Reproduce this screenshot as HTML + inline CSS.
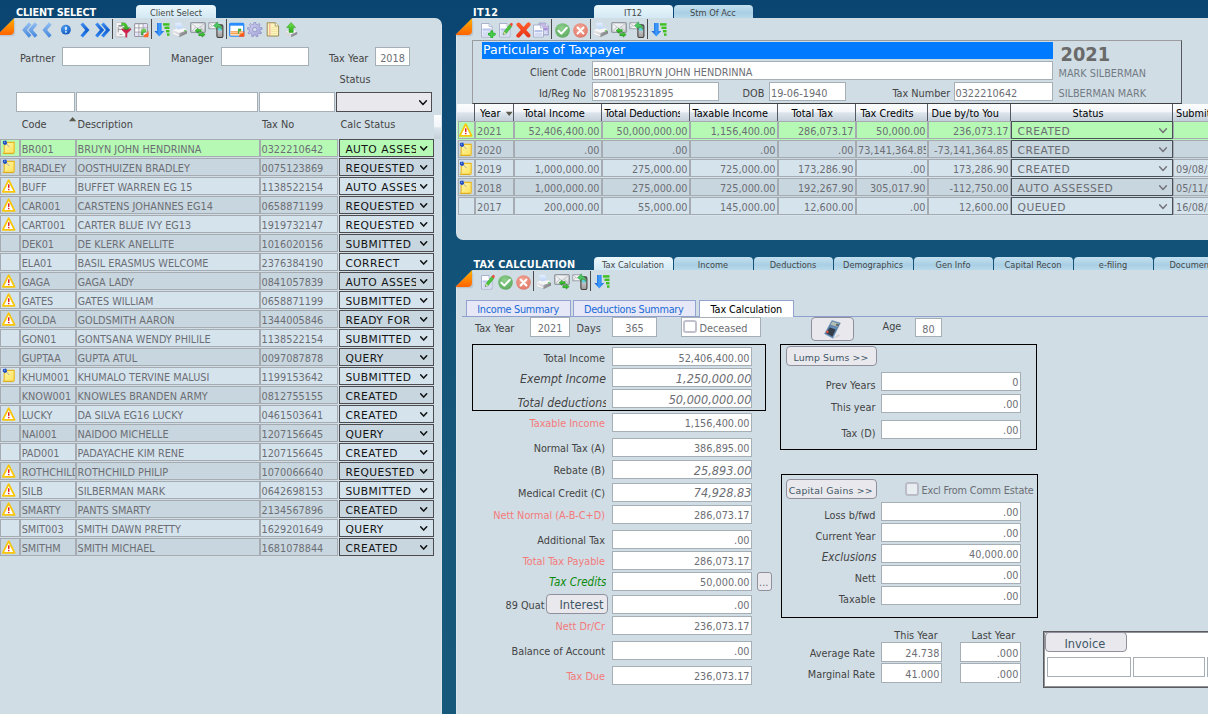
<!DOCTYPE html><html><head><meta charset="utf-8"><title>Client Select</title><style>
*{box-sizing:content-box;margin:0;padding:0}
html,body{width:1208px;height:714px;overflow:hidden}
body{position:relative;background:linear-gradient(180deg,#0a4571 0px,#0b4772 40px,#125279 250px,#16577a 500px,#17597b 714px);font-family:"DejaVu Sans Condensed","Liberation Sans",sans-serif}
div,span,svg{position:absolute}
.x{white-space:nowrap;line-height:14px;height:14px;color:#444;overflow:visible}
.t{font:10.8px "DejaVu Sans Condensed","Liberation Sans",sans-serif;line-height:14px}
.tb{font:bold 10.8px "DejaVu Sans Condensed","Liberation Sans",sans-serif;line-height:14px;color:#fdfdfd}
.tab{font:9.2px "DejaVu Sans Condensed","Liberation Sans",sans-serif;line-height:14px;color:#464646}
.it{font:italic 12.2px "DejaVu Sans Condensed","Liberation Sans",sans-serif;line-height:14px}
.sel{font:10.7px "DejaVu Sans","Liberation Sans",sans-serif;line-height:14px;color:#141414;letter-spacing:.42px;word-spacing:.4px}
.btn{font:11.4px "DejaVu Sans","Liberation Sans",sans-serif;line-height:14px;color:#3d5566}
.sbtn{font:9.35px "DejaVu Sans","Liberation Sans",sans-serif;line-height:14px;color:#3d5566;letter-spacing:.12px}
.big{font:bold 19.8px "DejaVu Sans Condensed","Liberation Sans",sans-serif;line-height:14px;color:#6a6a6a}
.ttl{font:12.5px "DejaVu Sans","Liberation Sans",sans-serif;line-height:14px;color:#fff}
.g{color:#6c6e74}
.g2{color:#737b84}
.k{color:#000}
.d{color:#444}
.r{color:#f47a7a}
.gr{color:#0a8a0a}
.bl{color:#1a6ad6}
.panel{background:#d0dde5}
.in{background:#fff;border:1px solid #a7afb6}
.c{border:1px solid #a6abb2}
.bt{background:#e9e9ed;border:1px solid #8f8f9d;border-radius:4px}
.sl{border:1px solid #4c4c50}
.sep{width:1px;background:#4a4a4a}
.bb{border:1px solid #000}
</style></head><body>
<div class="panel" style="left:0px;top:18px;width:442px;height:696px;border-top-right-radius:7px"></div>
<div class="" style="left:441px;top:25px;width:1px;height:689px;background:#dce6ed"></div>
<span class="x tb" style="left:16px;top:6px;letter-spacing:-.15px">CLIENT SELECT</span>
<div class="" style="left:136px;top:5px;width:80px;height:13px;background:linear-gradient(180deg,#eaf7fc 0%,#d3e9f4 100%);border-radius:4px 4px 0 0"></div>
<span class="x tab" style="left:26.0px;width:300px;text-align:center;top:6px;">Client Select</span>
<svg style="left:-3px;top:18px" width="20" height="20" viewBox="0 0 20 20"><defs><linearGradient id="g1" x1="0" y1="0" x2="0" y2="1"><stop offset="0" stop-color="#ffb000"/><stop offset="1" stop-color="#ff6400"/></linearGradient></defs><path d="M-1 -1 L17.6 -1 L17.6 0 L0 17.6 L-1 17.6 Z" fill="#0b4672"/><path d="M1.2 18.2 L15 18.2 Q18.2 18.2 18.2 15 L18.2 2 Z" fill="#7d8a94" opacity=".25"/><path d="M17 .3 L17 12.5 Q17 17 12.5 17 L.3 17 Z" fill="url(#g1)"/></svg>
<svg style="left:0px;top:18px" width="116" height="24" viewBox="0 0 116 24"><defs><linearGradient id="g2" x1="0" y1="0" x2="0" y2="1"><stop offset="0" stop-color="#8fbcf0"/><stop offset="1" stop-color="#4a8ade"/></linearGradient><linearGradient id="g3" x1="0" y1="0" x2="0" y2="1"><stop offset="0" stop-color="#3f8df0"/><stop offset=".5" stop-color="#0f5fd0"/><stop offset="1" stop-color="#2f86f0"/></linearGradient><radialGradient id="g4" cx=".4" cy=".3" r=".8"><stop offset="0" stop-color="#4fa0f5"/><stop offset="1" stop-color="#0a50b8"/></radialGradient></defs><path d="M30.1 5.5 L24.5 12 L30.1 18.5" fill="none" stroke="url(#g2)" stroke-width="3.5" stroke-linejoin="miter" stroke-linecap="butt"/><path d="M36.1 5.5 L30.5 12 L36.1 18.5" fill="none" stroke="url(#g2)" stroke-width="3.5" stroke-linejoin="miter" stroke-linecap="butt"/><path d="M50.3 5.5 L44.7 12 L50.3 18.5" fill="none" stroke="url(#g2)" stroke-width="3.5" stroke-linejoin="miter" stroke-linecap="butt"/><circle cx="65.9" cy="11.7" r="4.9" fill="url(#g4)"/><rect x="65.1" y="8.8" width="1.7" height="3.4" rx=".6" fill="#eaf3ff"/><rect x="65.1" y="13" width="1.7" height="1.7" rx=".6" fill="#eaf3ff"/><path d="M81.7 5.5 L87.3 12 L81.7 18.5" fill="none" stroke="url(#g3)" stroke-width="3.3" stroke-linejoin="miter" stroke-linecap="butt"/><path d="M96.4 5.5 L102.0 12 L96.4 18.5" fill="none" stroke="url(#g3)" stroke-width="3.3" stroke-linejoin="miter" stroke-linecap="butt"/><path d="M102.4 5.5 L108.0 12 L102.4 18.5" fill="none" stroke="url(#g3)" stroke-width="3.3" stroke-linejoin="miter" stroke-linecap="butt"/><rect x="112" y="1" width="1" height="20" fill="#4a4a4a"/></svg>
<svg style="left:115px;top:22px" width="17" height="16" viewBox="0 0 17 16"><defs><linearGradient id="g5" x1="0" y1="0" x2="0" y2="1"><stop offset="0" stop-color="#5ad03a"/><stop offset="1" stop-color="#1f9a1a"/></linearGradient><linearGradient id="g6" x1="0" y1="0" x2="0" y2="1"><stop offset="0" stop-color="#c4103c"/><stop offset="1" stop-color="#f0406a"/></linearGradient></defs><rect x="1" y=".6" width="9.4" height="14.2" fill="#f4f4f5" stroke="#c9c9cd" stroke-width=".8"/><rect x="1.4" y="14.6" width="9" height=".9" fill="#b9b9bd" opacity=".7"/><rect x="3.4" y="3.2" width="4" height="1.4" fill="#7d7d82"/><path d="M3.2 5.2 V10.4 M3.2 7.4 H6.4" stroke="#8d8d92" stroke-width=".9" fill="none"/><rect x="4.6" y="12.2" width="2.6" height=".8" fill="#9a9a9e"/><path d="M6.6 .8 Q12 .2 12.6 5.6 L14.9 5.6 L11.3 9.4 L7.7 5.6 L9.9 5.6 Q9.6 3 6.6 3.2 Z" fill="url(#g5)" stroke="#1f8a14" stroke-width=".4"/><path d="M6.8 6.6 Q11.3 9.2 15.8 6.6 L15.8 7.8 L12 11.4 L12 15.2 L10.7 15.2 L10.7 11.4 L6.8 7.8 Z" fill="url(#g6)" stroke="#b00c38" stroke-width=".4"/></svg>
<svg style="left:134px;top:23px" width="16" height="15" viewBox="0 0 16 15"><defs><linearGradient id="g7" x1="0" y1="0" x2="0" y2="1"><stop offset="0" stop-color="#7fe05a"/><stop offset="1" stop-color="#2a9a2a"/></linearGradient></defs><rect x=".6" y=".6" width="12.8" height="12.8" rx="1" fill="#fdfdff" stroke="#98989f" stroke-width="1.1"/><rect x="9.6" y="1.2" width="3.2" height="3.4" fill="#e6e0ff"/><rect x="1.2" y="9.6" width="3.4" height="3.2" fill="#e6e0ff"/><rect x="5.4" y="9.6" width="3.4" height="3.2" fill="#efeaff"/><path d="M4.9 .6 V13.4 M9.1 .6 V13.4 M.6 4.9 H13.4 M.6 9.1 H13.4" stroke="#a3a3ad" stroke-width="1" fill="none"/><path d="M7 12 L7.4 6.4 L10.8 6 Q12.4 6.2 12.2 7.8 Q12 9.4 10.4 9.4 L9 9.4 L8.8 12 Z" fill="url(#g7)" stroke="#2a8a2a" stroke-width=".3"/><path d="M14.4 7.6 Q15 11 14.2 14.2 L9.6 14.2 Q9.4 12 11 11.2 Q13.6 10.6 14.4 7.6 Z" fill="#ff6a2a"/></svg>
<div class="sep" style="left:151px;top:19px;width:1px;height:20px;"></div>
<svg style="left:154px;top:22px" width="16" height="16" viewBox="0 0 16 16"><defs><linearGradient id="g8" x1="0" y1="0" x2="1" y2="0"><stop offset="0" stop-color="#0a55c8"/><stop offset=".5" stop-color="#3f9bff"/><stop offset="1" stop-color="#1a6fe0"/></linearGradient></defs><path d="M3 1 L7.6 1 L7.6 9 L10.2 9 L5.3 14.6 L.4 9 L3 9 Z" fill="url(#g8)"/><rect x="9" y="1.2" width="6.5" height="2.4" fill="#3fc01f"/><rect x="10.5" y="4.6" width="5" height="2.4" fill="#3fc01f"/><rect x="12" y="8" width="3.5" height="2.4" fill="#3fc01f"/><rect x="13" y="11.4" width="2.5" height="2.4" fill="#3fc01f"/></svg>
<svg style="left:172px;top:22px" width="16" height="16" viewBox="0 0 16 16"><defs><linearGradient id="g9" x1="0" y1="0" x2="0" y2="1"><stop offset="0" stop-color="#ececee"/><stop offset="1" stop-color="#c2c2c5"/></linearGradient><linearGradient id="g11" x1="0" y1="0" x2="1" y2="1"><stop offset="0" stop-color="#b4b4b7"/><stop offset="1" stop-color="#6c6c6f"/></linearGradient><linearGradient id="g10" x1="0" y1="0" x2="0" y2="1"><stop offset="0" stop-color="#eaf2ff"/><stop offset="1" stop-color="#b9d3f7"/></linearGradient></defs><path d="M2.6 1 L8.8 .5 L11.3 6.2 L5 7.2 Z" fill="url(#g10)" stroke="#cfdff2" stroke-width=".5"/><path d="M.6 8.2 L4.6 6.6 L6 7.4 L11 6.4 L12.4 6.2 L15 8.4 L7.6 11 Z" fill="#f6f6f7"/><path d="M.6 8.2 L7.6 11 L7.4 15.2 L.6 12.2 Z" fill="url(#g9)"/><path d="M7.6 11 L15 8.4 L15 11.6 L7.4 15.2 Z" fill="url(#g11)"/><path d="M1.2 10.6 L6.8 13 L6.8 14.3 L1.2 11.9 Z" fill="#fdfdfd"/><ellipse cx="13" cy="8.7" rx="1" ry=".6" fill="#3ec62a"/></svg>
<svg style="left:190px;top:21px" width="17" height="17" viewBox="0 0 17 17"><defs><linearGradient id="g12" x1="0" y1="0" x2="1" y2="1"><stop offset="0" stop-color="#fdfdfd"/><stop offset="1" stop-color="#d5d7da"/></linearGradient><linearGradient id="g13" x1="0" y1="0" x2="0" y2="1"><stop offset="0" stop-color="#58e048"/><stop offset="1" stop-color="#14a010"/></linearGradient></defs><rect x=".8" y="1.7" width="14.4" height="9.6" rx=".8" fill="url(#g12)" stroke="#7d838b" stroke-width="1.1"/><path d="M1.2 2.2 L8 7.6 L14.8 2.2 M1.2 11 L5.8 6 M14.8 11 L10.2 6" fill="none" stroke="#b9bcc2" stroke-width=".8"/><path d="M5 9.7 L8 7.2 L8 8.6 L11.2 8.6 L11.2 10.8 L8 10.8 L8 12.2 Z" fill="url(#g13)" stroke="#1a7a14" stroke-width=".45"/><path d="M15.2 13.6 L12.2 11.1 L12.2 12.5 L8.8 12.5 L8.8 14.7 L12.2 14.7 L12.2 16.1 Z" fill="url(#g13)" stroke="#1a7a14" stroke-width=".45"/></svg>
<svg style="left:207.5px;top:21px" width="16" height="17" viewBox="0 0 16 17"><defs><linearGradient id="g14" x1="0" y1="0" x2="0" y2="1"><stop offset="0" stop-color="#7a7a7c"/><stop offset=".45" stop-color="#c6c6c8"/><stop offset="1" stop-color="#9a9a9c"/></linearGradient></defs><rect x=".8" y="1.8" width="8" height="6" fill="#f6f6f7" stroke="#8c9098" stroke-width=".8"/><path d="M1 2 L4.8 5.2 L8.6 2 M1 7.6 L3.6 4.4" fill="none" stroke="#a9adb3" stroke-width=".7"/><rect x="8.9" y="3.9" width="6" height="12.6" rx="1.4" fill="url(#g14)" stroke="#463f3a" stroke-width="1.1"/><rect x="10" y="7" width="3.8" height="2.6" fill="#5fd0e0"/><path d="M5.6 4.8 L9.6 .8 L9.6 2.9 Q13.8 3.2 13.6 8.4 Q12.4 5.6 9.6 5.9 L9.6 8 Z" fill="#4cc860" stroke="#23903a" stroke-width=".45"/></svg>
<div class="sep" style="left:226px;top:19px;width:1px;height:20px;"></div>
<svg style="left:229px;top:22px" width="16" height="15" viewBox="0 0 16 15"><rect x=".7" y="1.3" width="14" height="12.8" rx="1" fill="#fff" stroke="#2a8cff" stroke-width="1.3"/><rect x=".7" y="1.3" width="14" height="2.4" fill="#2a8cff"/><rect x="1.5" y="9.3" width="12.4" height="1.2" fill="#ff8c2a"/><rect x="1.5" y="11" width="12.4" height="1.2" fill="#ffa04a"/><rect x="1.5" y="12.6" width="12.4" height=".9" fill="#ffbe80"/><path d="M8.8 11.8 L9 6.8 L11.4 6.6 Q12.6 6.8 12.4 8 Q12.2 9.2 11 9.2 L10.2 9.2 L10.1 11.8 Z" fill="#44b044"/><path d="M15.4 8.2 L15.4 14.8 L9.8 14.8 Q10 12.6 11.8 12 Q14.6 11.4 15.4 8.2 Z" fill="#ff5a1a"/></svg>
<svg style="left:247px;top:22px" width="16" height="16" viewBox="0 0 16 16"><defs><linearGradient id="g15" x1="0" y1="0" x2="1" y2="1"><stop offset="0" stop-color="#cfcff0"/><stop offset="1" stop-color="#a3a3d8"/></linearGradient></defs><path d="M6.78 2.30 L6.91 0.25 L8.69 0.25 L8.82 2.30 L10.43 2.88 L11.84 1.40 L13.20 2.54 L11.99 4.19 L12.85 5.67 L14.88 5.45 L15.19 7.20 L13.20 7.68 L12.90 9.37 L14.61 10.51 L13.72 12.04 L11.88 11.13 L10.57 12.23 L11.15 14.20 L9.48 14.81 L8.66 12.93 L6.94 12.93 L6.12 14.81 L4.45 14.20 L5.03 12.23 L3.72 11.13 L1.88 12.04 L0.99 10.51 L2.70 9.37 L2.40 7.68 L0.41 7.20 L0.72 5.45 L2.75 5.67 L3.61 4.19 L2.40 2.54 L3.76 1.40 L5.17 2.88 Z" fill="url(#g15)" stroke="#8a8ac4" stroke-width=".7" stroke-linejoin="round"/><circle cx="7.8" cy="7.6" r="2.2" fill="#d3dfe8" stroke="#8585c0" stroke-width=".7"/></svg>
<svg style="left:266px;top:22px" width="14" height="15" viewBox="0 0 14 15"><path d="M1.2 .8 L9.2 .8 L12.6 4 L12.6 14 L1.2 14 Z" fill="#fdf5c0" stroke="#8f7f45" stroke-width=".9"/><path d="M9.2 .8 L9.2 4 L12.6 4" fill="#fffbe4" stroke="#8f7f45" stroke-width=".7"/><rect x="3.4" y="1.3" width=".9" height="12.3" fill="#f29484"/><path d="M5 5.5 H11.4 M5 7.5 H11.4 M5 9.5 H11.4 M5 11.5 H11.4" stroke="#ecdc96" stroke-width=".7"/></svg>
<svg style="left:284px;top:22px" width="15" height="16" viewBox="0 0 15 16"><defs><linearGradient id="g16" x1="0" y1="0" x2="0" y2="1"><stop offset="0" stop-color="#6ee04a"/><stop offset="1" stop-color="#2fae1c"/></linearGradient></defs><path d="M1 9.8 L4.4 8 L10.6 8 L13.2 9.8 L7.2 12.6 Z" fill="#f4f4f5" stroke="#c2c2c6" stroke-width=".4"/><path d="M1 9.8 L7.2 12.6 L7.2 15.2 L1 12.2 Z" fill="#d8d8da"/><path d="M13.2 9.8 L7.2 12.6 L7.2 15.2 L13.2 12.2 Z" fill="#8e8e92"/><path d="M7.1 .5 L11.6 5.6 L9.2 5.6 L9.2 10.4 L5 10.4 L5 5.6 L2.6 5.6 Z" fill="url(#g16)" stroke="#2a9a18" stroke-width=".5"/></svg>
<span class="x t" style="left:20px;top:52px;">Partner</span>
<div class="in" style="left:62px;top:47px;width:86px;height:17px;"></div>
<span class="x t" style="left:171px;top:52px;">Manager</span>
<div class="in" style="left:221px;top:47px;width:86px;height:17px;"></div>
<span class="x t" style="left:329px;top:52px;">Tax Year</span>
<div class="in" style="left:375px;top:47px;width:33px;height:17px;"></div>
<span class="x t g" style="left:242.5px;width:300px;text-align:center;top:52px;">2018</span>
<span class="x t" style="left:339.5px;top:73px;">Status</span>
<div class="in" style="left:16px;top:92px;width:56.5px;height:18px;"></div>
<div class="in" style="left:76px;top:92px;width:179.5px;height:18px;"></div>
<div class="in" style="left:259px;top:92px;width:73.5px;height:18px;"></div>
<div class="sl" style="left:336px;top:92px;width:94px;height:18px;background:#e9e9ed"></div>
<svg style="left:418.5px;top:99.6px" width="9" height="6.48" viewBox="0 0 9 6.48"><path d="M0.6 0.8 L4.0 4.48 L7.4 0.8" fill="none" stroke="#111" stroke-width="1.5" stroke-linecap="round" stroke-linejoin="round"/></svg>
<span class="x t" style="left:21.7px;top:118px;">Code</span>
<span class="x t" style="left:77.5px;top:118px;">Description</span>
<span class="x t" style="left:262px;top:118px;">Tax No</span>
<span class="x t" style="left:340.5px;top:118px;">Calc Status</span>
<svg style="left:68px;top:116px" width="10" height="6" viewBox="0 0 10 6"><path d="M1 5.2 L4.6 1 L8.2 5.2 Z" fill="#5a5a4c"/></svg>
<div class="" style="left:434px;top:115px;width:7px;height:23.5px;background:linear-gradient(180deg,#fbfcfd 0%,#f2f6f9 48%,#dbe4eb 54%,#c4d0da 100%)"></div>
<div class="c" style="left:0px;top:139px;width:18px;height:16px;background:#b5f9b4"></div>
<div class="c" style="left:20px;top:139px;width:54px;height:16px;background:#b5f9b4"></div>
<div class="c" style="left:76px;top:139px;width:182px;height:16px;background:#b5f9b4"></div>
<div class="c" style="left:260px;top:139px;width:76px;height:16px;background:#b5f9b4"></div>
<svg style="left:2px;top:140px" width="15" height="16" viewBox="0 0 15 16"><defs><linearGradient id="g17" x1="0" y1="0" x2="1" y2="1"><stop offset="0" stop-color="#fff8a8"/><stop offset="1" stop-color="#fbe05c"/></linearGradient></defs><path d="M2.2 2.4 L12.2 2.4 L12.2 12 Q12.2 13.3 11 13.3 L1.4 13.3 Q2.2 12.5 2.2 11.2 Z" fill="url(#g17)" stroke="#e9b822" stroke-width="1.1"/><path d="M1.6 13.6 L11.4 13.6" stroke="#d9a514" stroke-width=".8"/><path d="M3.4 2.8 L7.4 7" stroke="#a2a2ac" stroke-width=".9"/><path d="M1 1 L4.2 .6 L5.2 3.4 L3 5.2 L.8 3.6 Z" fill="#1d4ec4"/><circle cx="2.6" cy="2.2" r=".8" fill="#6a96f4"/></svg>
<div style="left:21px;top:140px;width:54px;height:16px;overflow:hidden"><span class="x t g" style="left:.7px;top:3px">BR001</span></div>
<span class="x t g" style="left:77.5px;top:143px;">BRUYN JOHN HENDRINNA</span>
<span class="x t g" style="left:261.5px;top:143px;">0322210642</span>
<div class="sl" style="left:339px;top:139px;width:92.5px;height:16px;background:#b5f9b4"></div>
<div style="left:345px;top:140px;width:70.5px;height:16px;overflow:hidden"><span class="x sel" style="left:.4px;top:2.8000000000000007px">AUTO ASSESSED</span></div>
<svg style="left:420.3px;top:145.8px" width="8.3" height="6.088" viewBox="0 0 8.3 6.088"><path d="M0.6 0.8 L3.65 4.088 L6.7 0.8" fill="none" stroke="#111" stroke-width="1.5" stroke-linecap="round" stroke-linejoin="round"/></svg>
<div class="c" style="left:0px;top:158px;width:18px;height:16px;background:#c8d6df"></div>
<div class="c" style="left:20px;top:158px;width:54px;height:16px;background:#c8d6df"></div>
<div class="c" style="left:76px;top:158px;width:182px;height:16px;background:#c8d6df"></div>
<div class="c" style="left:260px;top:158px;width:76px;height:16px;background:#c8d6df"></div>
<svg style="left:2px;top:159px" width="15" height="16" viewBox="0 0 15 16"><defs><linearGradient id="g18" x1="0" y1="0" x2="1" y2="1"><stop offset="0" stop-color="#fff8a8"/><stop offset="1" stop-color="#fbe05c"/></linearGradient></defs><path d="M2.2 2.4 L12.2 2.4 L12.2 12 Q12.2 13.3 11 13.3 L1.4 13.3 Q2.2 12.5 2.2 11.2 Z" fill="url(#g18)" stroke="#e9b822" stroke-width="1.1"/><path d="M1.6 13.6 L11.4 13.6" stroke="#d9a514" stroke-width=".8"/><path d="M3.4 2.8 L7.4 7" stroke="#a2a2ac" stroke-width=".9"/><path d="M1 1 L4.2 .6 L5.2 3.4 L3 5.2 L.8 3.6 Z" fill="#1d4ec4"/><circle cx="2.6" cy="2.2" r=".8" fill="#6a96f4"/></svg>
<div style="left:21px;top:159px;width:54px;height:16px;overflow:hidden"><span class="x t g" style="left:.7px;top:3px">BRADLEY</span></div>
<span class="x t g" style="left:77.5px;top:162px;">OOSTHUIZEN BRADLEY</span>
<span class="x t g" style="left:261.5px;top:162px;">0075123869</span>
<div class="sl" style="left:339px;top:158px;width:92.5px;height:16px;background:#c8d6df"></div>
<div style="left:345px;top:159px;width:70.5px;height:16px;overflow:hidden"><span class="x sel" style="left:.4px;top:2.8000000000000007px">REQUESTED</span></div>
<svg style="left:420.3px;top:164.8px" width="8.3" height="6.088" viewBox="0 0 8.3 6.088"><path d="M0.6 0.8 L3.65 4.088 L6.7 0.8" fill="none" stroke="#111" stroke-width="1.5" stroke-linecap="round" stroke-linejoin="round"/></svg>
<div class="c" style="left:0px;top:177px;width:18px;height:16px;background:#d5e3ed"></div>
<div class="c" style="left:20px;top:177px;width:54px;height:16px;background:#d5e3ed"></div>
<div class="c" style="left:76px;top:177px;width:182px;height:16px;background:#d5e3ed"></div>
<div class="c" style="left:260px;top:177px;width:76px;height:16px;background:#d5e3ed"></div>
<svg style="left:2px;top:179px" width="14" height="15" viewBox="0 0 14 15"><path d="M6.7 1.2 L12.6 12.8 L.8 12.8 Z" fill="#fff" stroke="#f8c60a" stroke-width="1.8" stroke-linejoin="round"/><rect x="6" y="5.2" width="1.5" height="3.8" rx=".4" fill="#e32222"/><rect x="6" y="9.8" width="1.5" height="1.5" rx=".4" fill="#e32222"/></svg>
<div style="left:21px;top:178px;width:54px;height:16px;overflow:hidden"><span class="x t g" style="left:.7px;top:3px">BUFF</span></div>
<span class="x t g" style="left:77.5px;top:181px;">BUFFET WARREN EG 15</span>
<span class="x t g" style="left:261.5px;top:181px;">1138522154</span>
<div class="sl" style="left:339px;top:177px;width:92.5px;height:16px;background:#d5e3ed"></div>
<div style="left:345px;top:178px;width:70.5px;height:16px;overflow:hidden"><span class="x sel" style="left:.4px;top:2.8000000000000007px">AUTO ASSESSED</span></div>
<svg style="left:420.3px;top:183.8px" width="8.3" height="6.088" viewBox="0 0 8.3 6.088"><path d="M0.6 0.8 L3.65 4.088 L6.7 0.8" fill="none" stroke="#111" stroke-width="1.5" stroke-linecap="round" stroke-linejoin="round"/></svg>
<div class="c" style="left:0px;top:196px;width:18px;height:16px;background:#c8d6df"></div>
<div class="c" style="left:20px;top:196px;width:54px;height:16px;background:#c8d6df"></div>
<div class="c" style="left:76px;top:196px;width:182px;height:16px;background:#c8d6df"></div>
<div class="c" style="left:260px;top:196px;width:76px;height:16px;background:#c8d6df"></div>
<svg style="left:2px;top:198px" width="14" height="15" viewBox="0 0 14 15"><path d="M6.7 1.2 L12.6 12.8 L.8 12.8 Z" fill="#fff" stroke="#f8c60a" stroke-width="1.8" stroke-linejoin="round"/><rect x="6" y="5.2" width="1.5" height="3.8" rx=".4" fill="#e32222"/><rect x="6" y="9.8" width="1.5" height="1.5" rx=".4" fill="#e32222"/></svg>
<div style="left:21px;top:197px;width:54px;height:16px;overflow:hidden"><span class="x t g" style="left:.7px;top:3px">CAR001</span></div>
<span class="x t g" style="left:77.5px;top:200px;">CARSTENS JOHANNES EG14</span>
<span class="x t g" style="left:261.5px;top:200px;">0658871199</span>
<div class="sl" style="left:339px;top:196px;width:92.5px;height:16px;background:#c8d6df"></div>
<div style="left:345px;top:197px;width:70.5px;height:16px;overflow:hidden"><span class="x sel" style="left:.4px;top:2.8000000000000007px">REQUESTED</span></div>
<svg style="left:420.3px;top:202.8px" width="8.3" height="6.088" viewBox="0 0 8.3 6.088"><path d="M0.6 0.8 L3.65 4.088 L6.7 0.8" fill="none" stroke="#111" stroke-width="1.5" stroke-linecap="round" stroke-linejoin="round"/></svg>
<div class="c" style="left:0px;top:215px;width:18px;height:16px;background:#d5e3ed"></div>
<div class="c" style="left:20px;top:215px;width:54px;height:16px;background:#d5e3ed"></div>
<div class="c" style="left:76px;top:215px;width:182px;height:16px;background:#d5e3ed"></div>
<div class="c" style="left:260px;top:215px;width:76px;height:16px;background:#d5e3ed"></div>
<svg style="left:2px;top:217px" width="14" height="15" viewBox="0 0 14 15"><path d="M6.7 1.2 L12.6 12.8 L.8 12.8 Z" fill="#fff" stroke="#f8c60a" stroke-width="1.8" stroke-linejoin="round"/><rect x="6" y="5.2" width="1.5" height="3.8" rx=".4" fill="#e32222"/><rect x="6" y="9.8" width="1.5" height="1.5" rx=".4" fill="#e32222"/></svg>
<div style="left:21px;top:216px;width:54px;height:16px;overflow:hidden"><span class="x t g" style="left:.7px;top:3px">CART001</span></div>
<span class="x t g" style="left:77.5px;top:219px;">CARTER BLUE IVY EG13</span>
<span class="x t g" style="left:261.5px;top:219px;">1919732147</span>
<div class="sl" style="left:339px;top:215px;width:92.5px;height:16px;background:#d5e3ed"></div>
<div style="left:345px;top:216px;width:70.5px;height:16px;overflow:hidden"><span class="x sel" style="left:.4px;top:2.8000000000000007px">REQUESTED</span></div>
<svg style="left:420.3px;top:221.8px" width="8.3" height="6.088" viewBox="0 0 8.3 6.088"><path d="M0.6 0.8 L3.65 4.088 L6.7 0.8" fill="none" stroke="#111" stroke-width="1.5" stroke-linecap="round" stroke-linejoin="round"/></svg>
<div class="c" style="left:0px;top:234px;width:18px;height:16px;background:#c8d6df"></div>
<div class="c" style="left:20px;top:234px;width:54px;height:16px;background:#c8d6df"></div>
<div class="c" style="left:76px;top:234px;width:182px;height:16px;background:#c8d6df"></div>
<div class="c" style="left:260px;top:234px;width:76px;height:16px;background:#c8d6df"></div>
<div style="left:21px;top:235px;width:54px;height:16px;overflow:hidden"><span class="x t g" style="left:.7px;top:3px">DEK01</span></div>
<span class="x t g" style="left:77.5px;top:238px;">DE KLERK ANELLITE</span>
<span class="x t g" style="left:261.5px;top:238px;">1016020156</span>
<div class="sl" style="left:339px;top:234px;width:92.5px;height:16px;background:#c8d6df"></div>
<div style="left:345px;top:235px;width:70.5px;height:16px;overflow:hidden"><span class="x sel" style="left:.4px;top:2.8000000000000007px">SUBMITTED</span></div>
<svg style="left:420.3px;top:240.8px" width="8.3" height="6.088" viewBox="0 0 8.3 6.088"><path d="M0.6 0.8 L3.65 4.088 L6.7 0.8" fill="none" stroke="#111" stroke-width="1.5" stroke-linecap="round" stroke-linejoin="round"/></svg>
<div class="c" style="left:0px;top:253px;width:18px;height:16px;background:#d5e3ed"></div>
<div class="c" style="left:20px;top:253px;width:54px;height:16px;background:#d5e3ed"></div>
<div class="c" style="left:76px;top:253px;width:182px;height:16px;background:#d5e3ed"></div>
<div class="c" style="left:260px;top:253px;width:76px;height:16px;background:#d5e3ed"></div>
<div style="left:21px;top:254px;width:54px;height:16px;overflow:hidden"><span class="x t g" style="left:.7px;top:3px">ELA01</span></div>
<span class="x t g" style="left:77.5px;top:257px;">BASIL ERASMUS WELCOME</span>
<span class="x t g" style="left:261.5px;top:257px;">2376384190</span>
<div class="sl" style="left:339px;top:253px;width:92.5px;height:16px;background:#d5e3ed"></div>
<div style="left:345px;top:254px;width:70.5px;height:16px;overflow:hidden"><span class="x sel" style="left:.4px;top:2.8000000000000007px">CORRECT</span></div>
<svg style="left:420.3px;top:259.8px" width="8.3" height="6.088" viewBox="0 0 8.3 6.088"><path d="M0.6 0.8 L3.65 4.088 L6.7 0.8" fill="none" stroke="#111" stroke-width="1.5" stroke-linecap="round" stroke-linejoin="round"/></svg>
<div class="c" style="left:0px;top:272px;width:18px;height:16px;background:#c8d6df"></div>
<div class="c" style="left:20px;top:272px;width:54px;height:16px;background:#c8d6df"></div>
<div class="c" style="left:76px;top:272px;width:182px;height:16px;background:#c8d6df"></div>
<div class="c" style="left:260px;top:272px;width:76px;height:16px;background:#c8d6df"></div>
<svg style="left:2px;top:274px" width="14" height="15" viewBox="0 0 14 15"><path d="M6.7 1.2 L12.6 12.8 L.8 12.8 Z" fill="#fff" stroke="#f8c60a" stroke-width="1.8" stroke-linejoin="round"/><rect x="6" y="5.2" width="1.5" height="3.8" rx=".4" fill="#e32222"/><rect x="6" y="9.8" width="1.5" height="1.5" rx=".4" fill="#e32222"/></svg>
<div style="left:21px;top:273px;width:54px;height:16px;overflow:hidden"><span class="x t g" style="left:.7px;top:3px">GAGA</span></div>
<span class="x t g" style="left:77.5px;top:276px;">GAGA LADY</span>
<span class="x t g" style="left:261.5px;top:276px;">0841057839</span>
<div class="sl" style="left:339px;top:272px;width:92.5px;height:16px;background:#c8d6df"></div>
<div style="left:345px;top:273px;width:70.5px;height:16px;overflow:hidden"><span class="x sel" style="left:.4px;top:2.8000000000000007px">AUTO ASSESSED</span></div>
<svg style="left:420.3px;top:278.8px" width="8.3" height="6.088" viewBox="0 0 8.3 6.088"><path d="M0.6 0.8 L3.65 4.088 L6.7 0.8" fill="none" stroke="#111" stroke-width="1.5" stroke-linecap="round" stroke-linejoin="round"/></svg>
<div class="c" style="left:0px;top:291px;width:18px;height:16px;background:#d5e3ed"></div>
<div class="c" style="left:20px;top:291px;width:54px;height:16px;background:#d5e3ed"></div>
<div class="c" style="left:76px;top:291px;width:182px;height:16px;background:#d5e3ed"></div>
<div class="c" style="left:260px;top:291px;width:76px;height:16px;background:#d5e3ed"></div>
<svg style="left:2px;top:293px" width="14" height="15" viewBox="0 0 14 15"><path d="M6.7 1.2 L12.6 12.8 L.8 12.8 Z" fill="#fff" stroke="#f8c60a" stroke-width="1.8" stroke-linejoin="round"/><rect x="6" y="5.2" width="1.5" height="3.8" rx=".4" fill="#e32222"/><rect x="6" y="9.8" width="1.5" height="1.5" rx=".4" fill="#e32222"/></svg>
<div style="left:21px;top:292px;width:54px;height:16px;overflow:hidden"><span class="x t g" style="left:.7px;top:3px">GATES</span></div>
<span class="x t g" style="left:77.5px;top:295px;">GATES WILLIAM</span>
<span class="x t g" style="left:261.5px;top:295px;">0658871199</span>
<div class="sl" style="left:339px;top:291px;width:92.5px;height:16px;background:#d5e3ed"></div>
<div style="left:345px;top:292px;width:70.5px;height:16px;overflow:hidden"><span class="x sel" style="left:.4px;top:2.8000000000000007px">SUBMITTED</span></div>
<svg style="left:420.3px;top:297.8px" width="8.3" height="6.088" viewBox="0 0 8.3 6.088"><path d="M0.6 0.8 L3.65 4.088 L6.7 0.8" fill="none" stroke="#111" stroke-width="1.5" stroke-linecap="round" stroke-linejoin="round"/></svg>
<div class="c" style="left:0px;top:310px;width:18px;height:16px;background:#c8d6df"></div>
<div class="c" style="left:20px;top:310px;width:54px;height:16px;background:#c8d6df"></div>
<div class="c" style="left:76px;top:310px;width:182px;height:16px;background:#c8d6df"></div>
<div class="c" style="left:260px;top:310px;width:76px;height:16px;background:#c8d6df"></div>
<svg style="left:2px;top:312px" width="14" height="15" viewBox="0 0 14 15"><path d="M6.7 1.2 L12.6 12.8 L.8 12.8 Z" fill="#fff" stroke="#f8c60a" stroke-width="1.8" stroke-linejoin="round"/><rect x="6" y="5.2" width="1.5" height="3.8" rx=".4" fill="#e32222"/><rect x="6" y="9.8" width="1.5" height="1.5" rx=".4" fill="#e32222"/></svg>
<div style="left:21px;top:311px;width:54px;height:16px;overflow:hidden"><span class="x t g" style="left:.7px;top:3px">GOLDA</span></div>
<span class="x t g" style="left:77.5px;top:314px;">GOLDSMITH AARON</span>
<span class="x t g" style="left:261.5px;top:314px;">1344005846</span>
<div class="sl" style="left:339px;top:310px;width:92.5px;height:16px;background:#c8d6df"></div>
<div style="left:345px;top:311px;width:70.5px;height:16px;overflow:hidden"><span class="x sel" style="left:.4px;top:2.8000000000000007px">READY FOR</span></div>
<svg style="left:420.3px;top:316.8px" width="8.3" height="6.088" viewBox="0 0 8.3 6.088"><path d="M0.6 0.8 L3.65 4.088 L6.7 0.8" fill="none" stroke="#111" stroke-width="1.5" stroke-linecap="round" stroke-linejoin="round"/></svg>
<div class="c" style="left:0px;top:329px;width:18px;height:16px;background:#d5e3ed"></div>
<div class="c" style="left:20px;top:329px;width:54px;height:16px;background:#d5e3ed"></div>
<div class="c" style="left:76px;top:329px;width:182px;height:16px;background:#d5e3ed"></div>
<div class="c" style="left:260px;top:329px;width:76px;height:16px;background:#d5e3ed"></div>
<div style="left:21px;top:330px;width:54px;height:16px;overflow:hidden"><span class="x t g" style="left:.7px;top:3px">GON01</span></div>
<span class="x t g" style="left:77.5px;top:333px;">GONTSANA WENDY PHILILE</span>
<span class="x t g" style="left:261.5px;top:333px;">1138522154</span>
<div class="sl" style="left:339px;top:329px;width:92.5px;height:16px;background:#d5e3ed"></div>
<div style="left:345px;top:330px;width:70.5px;height:16px;overflow:hidden"><span class="x sel" style="left:.4px;top:2.8000000000000007px">SUBMITTED</span></div>
<svg style="left:420.3px;top:335.8px" width="8.3" height="6.088" viewBox="0 0 8.3 6.088"><path d="M0.6 0.8 L3.65 4.088 L6.7 0.8" fill="none" stroke="#111" stroke-width="1.5" stroke-linecap="round" stroke-linejoin="round"/></svg>
<div class="c" style="left:0px;top:348px;width:18px;height:16px;background:#c8d6df"></div>
<div class="c" style="left:20px;top:348px;width:54px;height:16px;background:#c8d6df"></div>
<div class="c" style="left:76px;top:348px;width:182px;height:16px;background:#c8d6df"></div>
<div class="c" style="left:260px;top:348px;width:76px;height:16px;background:#c8d6df"></div>
<div style="left:21px;top:349px;width:54px;height:16px;overflow:hidden"><span class="x t g" style="left:.7px;top:3px">GUPTAA</span></div>
<span class="x t g" style="left:77.5px;top:352px;">GUPTA ATUL</span>
<span class="x t g" style="left:261.5px;top:352px;">0097087878</span>
<div class="sl" style="left:339px;top:348px;width:92.5px;height:16px;background:#c8d6df"></div>
<div style="left:345px;top:349px;width:70.5px;height:16px;overflow:hidden"><span class="x sel" style="left:.4px;top:2.8000000000000007px">QUERY</span></div>
<svg style="left:420.3px;top:354.8px" width="8.3" height="6.088" viewBox="0 0 8.3 6.088"><path d="M0.6 0.8 L3.65 4.088 L6.7 0.8" fill="none" stroke="#111" stroke-width="1.5" stroke-linecap="round" stroke-linejoin="round"/></svg>
<div class="c" style="left:0px;top:367px;width:18px;height:16px;background:#d5e3ed"></div>
<div class="c" style="left:20px;top:367px;width:54px;height:16px;background:#d5e3ed"></div>
<div class="c" style="left:76px;top:367px;width:182px;height:16px;background:#d5e3ed"></div>
<div class="c" style="left:260px;top:367px;width:76px;height:16px;background:#d5e3ed"></div>
<svg style="left:2px;top:368px" width="15" height="16" viewBox="0 0 15 16"><defs><linearGradient id="g19" x1="0" y1="0" x2="1" y2="1"><stop offset="0" stop-color="#fff8a8"/><stop offset="1" stop-color="#fbe05c"/></linearGradient></defs><path d="M2.2 2.4 L12.2 2.4 L12.2 12 Q12.2 13.3 11 13.3 L1.4 13.3 Q2.2 12.5 2.2 11.2 Z" fill="url(#g19)" stroke="#e9b822" stroke-width="1.1"/><path d="M1.6 13.6 L11.4 13.6" stroke="#d9a514" stroke-width=".8"/><path d="M3.4 2.8 L7.4 7" stroke="#a2a2ac" stroke-width=".9"/><path d="M1 1 L4.2 .6 L5.2 3.4 L3 5.2 L.8 3.6 Z" fill="#1d4ec4"/><circle cx="2.6" cy="2.2" r=".8" fill="#6a96f4"/></svg>
<div style="left:21px;top:368px;width:54px;height:16px;overflow:hidden"><span class="x t g" style="left:.7px;top:3px">KHUM001</span></div>
<span class="x t g" style="left:77.5px;top:371px;">KHUMALO TERVINE MALUSI</span>
<span class="x t g" style="left:261.5px;top:371px;">1199153642</span>
<div class="sl" style="left:339px;top:367px;width:92.5px;height:16px;background:#d5e3ed"></div>
<div style="left:345px;top:368px;width:70.5px;height:16px;overflow:hidden"><span class="x sel" style="left:.4px;top:2.8000000000000007px">SUBMITTED</span></div>
<svg style="left:420.3px;top:373.8px" width="8.3" height="6.088" viewBox="0 0 8.3 6.088"><path d="M0.6 0.8 L3.65 4.088 L6.7 0.8" fill="none" stroke="#111" stroke-width="1.5" stroke-linecap="round" stroke-linejoin="round"/></svg>
<div class="c" style="left:0px;top:386px;width:18px;height:16px;background:#c8d6df"></div>
<div class="c" style="left:20px;top:386px;width:54px;height:16px;background:#c8d6df"></div>
<div class="c" style="left:76px;top:386px;width:182px;height:16px;background:#c8d6df"></div>
<div class="c" style="left:260px;top:386px;width:76px;height:16px;background:#c8d6df"></div>
<div style="left:21px;top:387px;width:54px;height:16px;overflow:hidden"><span class="x t g" style="left:.7px;top:3px">KNOW001</span></div>
<span class="x t g" style="left:77.5px;top:390px;">KNOWLES BRANDEN ARMY</span>
<span class="x t g" style="left:261.5px;top:390px;">0812755155</span>
<div class="sl" style="left:339px;top:386px;width:92.5px;height:16px;background:#c8d6df"></div>
<div style="left:345px;top:387px;width:70.5px;height:16px;overflow:hidden"><span class="x sel" style="left:.4px;top:2.8000000000000007px">CREATED</span></div>
<svg style="left:420.3px;top:392.8px" width="8.3" height="6.088" viewBox="0 0 8.3 6.088"><path d="M0.6 0.8 L3.65 4.088 L6.7 0.8" fill="none" stroke="#111" stroke-width="1.5" stroke-linecap="round" stroke-linejoin="round"/></svg>
<div class="c" style="left:0px;top:405px;width:18px;height:16px;background:#d5e3ed"></div>
<div class="c" style="left:20px;top:405px;width:54px;height:16px;background:#d5e3ed"></div>
<div class="c" style="left:76px;top:405px;width:182px;height:16px;background:#d5e3ed"></div>
<div class="c" style="left:260px;top:405px;width:76px;height:16px;background:#d5e3ed"></div>
<svg style="left:2px;top:407px" width="14" height="15" viewBox="0 0 14 15"><path d="M6.7 1.2 L12.6 12.8 L.8 12.8 Z" fill="#fff" stroke="#f8c60a" stroke-width="1.8" stroke-linejoin="round"/><rect x="6" y="5.2" width="1.5" height="3.8" rx=".4" fill="#e32222"/><rect x="6" y="9.8" width="1.5" height="1.5" rx=".4" fill="#e32222"/></svg>
<div style="left:21px;top:406px;width:54px;height:16px;overflow:hidden"><span class="x t g" style="left:.7px;top:3px">LUCKY</span></div>
<span class="x t g" style="left:77.5px;top:409px;">DA SILVA EG16 LUCKY</span>
<span class="x t g" style="left:261.5px;top:409px;">0461503641</span>
<div class="sl" style="left:339px;top:405px;width:92.5px;height:16px;background:#d5e3ed"></div>
<div style="left:345px;top:406px;width:70.5px;height:16px;overflow:hidden"><span class="x sel" style="left:.4px;top:2.8000000000000007px">CREATED</span></div>
<svg style="left:420.3px;top:411.8px" width="8.3" height="6.088" viewBox="0 0 8.3 6.088"><path d="M0.6 0.8 L3.65 4.088 L6.7 0.8" fill="none" stroke="#111" stroke-width="1.5" stroke-linecap="round" stroke-linejoin="round"/></svg>
<div class="c" style="left:0px;top:424px;width:18px;height:16px;background:#c8d6df"></div>
<div class="c" style="left:20px;top:424px;width:54px;height:16px;background:#c8d6df"></div>
<div class="c" style="left:76px;top:424px;width:182px;height:16px;background:#c8d6df"></div>
<div class="c" style="left:260px;top:424px;width:76px;height:16px;background:#c8d6df"></div>
<div style="left:21px;top:425px;width:54px;height:16px;overflow:hidden"><span class="x t g" style="left:.7px;top:3px">NAI001</span></div>
<span class="x t g" style="left:77.5px;top:428px;">NAIDOO MICHELLE</span>
<span class="x t g" style="left:261.5px;top:428px;">1207156645</span>
<div class="sl" style="left:339px;top:424px;width:92.5px;height:16px;background:#c8d6df"></div>
<div style="left:345px;top:425px;width:70.5px;height:16px;overflow:hidden"><span class="x sel" style="left:.4px;top:2.8000000000000007px">QUERY</span></div>
<svg style="left:420.3px;top:430.8px" width="8.3" height="6.088" viewBox="0 0 8.3 6.088"><path d="M0.6 0.8 L3.65 4.088 L6.7 0.8" fill="none" stroke="#111" stroke-width="1.5" stroke-linecap="round" stroke-linejoin="round"/></svg>
<div class="c" style="left:0px;top:443px;width:18px;height:16px;background:#d5e3ed"></div>
<div class="c" style="left:20px;top:443px;width:54px;height:16px;background:#d5e3ed"></div>
<div class="c" style="left:76px;top:443px;width:182px;height:16px;background:#d5e3ed"></div>
<div class="c" style="left:260px;top:443px;width:76px;height:16px;background:#d5e3ed"></div>
<div style="left:21px;top:444px;width:54px;height:16px;overflow:hidden"><span class="x t g" style="left:.7px;top:3px">PAD001</span></div>
<span class="x t g" style="left:77.5px;top:447px;">PADAYACHE KIM RENE</span>
<span class="x t g" style="left:261.5px;top:447px;">1207156645</span>
<div class="sl" style="left:339px;top:443px;width:92.5px;height:16px;background:#d5e3ed"></div>
<div style="left:345px;top:444px;width:70.5px;height:16px;overflow:hidden"><span class="x sel" style="left:.4px;top:2.8000000000000007px">CREATED</span></div>
<svg style="left:420.3px;top:449.8px" width="8.3" height="6.088" viewBox="0 0 8.3 6.088"><path d="M0.6 0.8 L3.65 4.088 L6.7 0.8" fill="none" stroke="#111" stroke-width="1.5" stroke-linecap="round" stroke-linejoin="round"/></svg>
<div class="c" style="left:0px;top:462px;width:18px;height:16px;background:#c8d6df"></div>
<div class="c" style="left:20px;top:462px;width:54px;height:16px;background:#c8d6df"></div>
<div class="c" style="left:76px;top:462px;width:182px;height:16px;background:#c8d6df"></div>
<div class="c" style="left:260px;top:462px;width:76px;height:16px;background:#c8d6df"></div>
<svg style="left:2px;top:464px" width="14" height="15" viewBox="0 0 14 15"><path d="M6.7 1.2 L12.6 12.8 L.8 12.8 Z" fill="#fff" stroke="#f8c60a" stroke-width="1.8" stroke-linejoin="round"/><rect x="6" y="5.2" width="1.5" height="3.8" rx=".4" fill="#e32222"/><rect x="6" y="9.8" width="1.5" height="1.5" rx=".4" fill="#e32222"/></svg>
<div style="left:21px;top:463px;width:54px;height:16px;overflow:hidden"><span class="x t g" style="left:.7px;top:3px">ROTHCHILD</span></div>
<span class="x t g" style="left:77.5px;top:466px;">ROTHCHILD PHILIP</span>
<span class="x t g" style="left:261.5px;top:466px;">1070066640</span>
<div class="sl" style="left:339px;top:462px;width:92.5px;height:16px;background:#c8d6df"></div>
<div style="left:345px;top:463px;width:70.5px;height:16px;overflow:hidden"><span class="x sel" style="left:.4px;top:2.8000000000000007px">REQUESTED</span></div>
<svg style="left:420.3px;top:468.8px" width="8.3" height="6.088" viewBox="0 0 8.3 6.088"><path d="M0.6 0.8 L3.65 4.088 L6.7 0.8" fill="none" stroke="#111" stroke-width="1.5" stroke-linecap="round" stroke-linejoin="round"/></svg>
<div class="c" style="left:0px;top:481px;width:18px;height:16px;background:#d5e3ed"></div>
<div class="c" style="left:20px;top:481px;width:54px;height:16px;background:#d5e3ed"></div>
<div class="c" style="left:76px;top:481px;width:182px;height:16px;background:#d5e3ed"></div>
<div class="c" style="left:260px;top:481px;width:76px;height:16px;background:#d5e3ed"></div>
<svg style="left:2px;top:483px" width="14" height="15" viewBox="0 0 14 15"><path d="M6.7 1.2 L12.6 12.8 L.8 12.8 Z" fill="#fff" stroke="#f8c60a" stroke-width="1.8" stroke-linejoin="round"/><rect x="6" y="5.2" width="1.5" height="3.8" rx=".4" fill="#e32222"/><rect x="6" y="9.8" width="1.5" height="1.5" rx=".4" fill="#e32222"/></svg>
<div style="left:21px;top:482px;width:54px;height:16px;overflow:hidden"><span class="x t g" style="left:.7px;top:3px">SILB</span></div>
<span class="x t g" style="left:77.5px;top:485px;">SILBERMAN MARK</span>
<span class="x t g" style="left:261.5px;top:485px;">0642698153</span>
<div class="sl" style="left:339px;top:481px;width:92.5px;height:16px;background:#d5e3ed"></div>
<div style="left:345px;top:482px;width:70.5px;height:16px;overflow:hidden"><span class="x sel" style="left:.4px;top:2.8000000000000007px">SUBMITTED</span></div>
<svg style="left:420.3px;top:487.8px" width="8.3" height="6.088" viewBox="0 0 8.3 6.088"><path d="M0.6 0.8 L3.65 4.088 L6.7 0.8" fill="none" stroke="#111" stroke-width="1.5" stroke-linecap="round" stroke-linejoin="round"/></svg>
<div class="c" style="left:0px;top:500px;width:18px;height:16px;background:#c8d6df"></div>
<div class="c" style="left:20px;top:500px;width:54px;height:16px;background:#c8d6df"></div>
<div class="c" style="left:76px;top:500px;width:182px;height:16px;background:#c8d6df"></div>
<div class="c" style="left:260px;top:500px;width:76px;height:16px;background:#c8d6df"></div>
<svg style="left:2px;top:502px" width="14" height="15" viewBox="0 0 14 15"><path d="M6.7 1.2 L12.6 12.8 L.8 12.8 Z" fill="#fff" stroke="#f8c60a" stroke-width="1.8" stroke-linejoin="round"/><rect x="6" y="5.2" width="1.5" height="3.8" rx=".4" fill="#e32222"/><rect x="6" y="9.8" width="1.5" height="1.5" rx=".4" fill="#e32222"/></svg>
<div style="left:21px;top:501px;width:54px;height:16px;overflow:hidden"><span class="x t g" style="left:.7px;top:3px">SMARTY</span></div>
<span class="x t g" style="left:77.5px;top:504px;">PANTS SMARTY</span>
<span class="x t g" style="left:261.5px;top:504px;">2134567896</span>
<div class="sl" style="left:339px;top:500px;width:92.5px;height:16px;background:#c8d6df"></div>
<div style="left:345px;top:501px;width:70.5px;height:16px;overflow:hidden"><span class="x sel" style="left:.4px;top:2.8000000000000007px">CREATED</span></div>
<svg style="left:420.3px;top:506.8px" width="8.3" height="6.088" viewBox="0 0 8.3 6.088"><path d="M0.6 0.8 L3.65 4.088 L6.7 0.8" fill="none" stroke="#111" stroke-width="1.5" stroke-linecap="round" stroke-linejoin="round"/></svg>
<div class="c" style="left:0px;top:519px;width:18px;height:16px;background:#d5e3ed"></div>
<div class="c" style="left:20px;top:519px;width:54px;height:16px;background:#d5e3ed"></div>
<div class="c" style="left:76px;top:519px;width:182px;height:16px;background:#d5e3ed"></div>
<div class="c" style="left:260px;top:519px;width:76px;height:16px;background:#d5e3ed"></div>
<div style="left:21px;top:520px;width:54px;height:16px;overflow:hidden"><span class="x t g" style="left:.7px;top:3px">SMIT003</span></div>
<span class="x t g" style="left:77.5px;top:523px;">SMITH DAWN PRETTY</span>
<span class="x t g" style="left:261.5px;top:523px;">1629201649</span>
<div class="sl" style="left:339px;top:519px;width:92.5px;height:16px;background:#d5e3ed"></div>
<div style="left:345px;top:520px;width:70.5px;height:16px;overflow:hidden"><span class="x sel" style="left:.4px;top:2.8000000000000007px">QUERY</span></div>
<svg style="left:420.3px;top:525.8px" width="8.3" height="6.088" viewBox="0 0 8.3 6.088"><path d="M0.6 0.8 L3.65 4.088 L6.7 0.8" fill="none" stroke="#111" stroke-width="1.5" stroke-linecap="round" stroke-linejoin="round"/></svg>
<div class="c" style="left:0px;top:538px;width:18px;height:16px;background:#c8d6df"></div>
<div class="c" style="left:20px;top:538px;width:54px;height:16px;background:#c8d6df"></div>
<div class="c" style="left:76px;top:538px;width:182px;height:16px;background:#c8d6df"></div>
<div class="c" style="left:260px;top:538px;width:76px;height:16px;background:#c8d6df"></div>
<svg style="left:2px;top:540px" width="14" height="15" viewBox="0 0 14 15"><path d="M6.7 1.2 L12.6 12.8 L.8 12.8 Z" fill="#fff" stroke="#f8c60a" stroke-width="1.8" stroke-linejoin="round"/><rect x="6" y="5.2" width="1.5" height="3.8" rx=".4" fill="#e32222"/><rect x="6" y="9.8" width="1.5" height="1.5" rx=".4" fill="#e32222"/></svg>
<div style="left:21px;top:539px;width:54px;height:16px;overflow:hidden"><span class="x t g" style="left:.7px;top:3px">SMITHM</span></div>
<span class="x t g" style="left:77.5px;top:542px;">SMITH MICHAEL</span>
<span class="x t g" style="left:261.5px;top:542px;">1681078844</span>
<div class="sl" style="left:339px;top:538px;width:92.5px;height:16px;background:#c8d6df"></div>
<div style="left:345px;top:539px;width:70.5px;height:16px;overflow:hidden"><span class="x sel" style="left:.4px;top:2.8000000000000007px">CREATED</span></div>
<svg style="left:420.3px;top:544.8px" width="8.3" height="6.088" viewBox="0 0 8.3 6.088"><path d="M0.6 0.8 L3.65 4.088 L6.7 0.8" fill="none" stroke="#111" stroke-width="1.5" stroke-linecap="round" stroke-linejoin="round"/></svg>
<div class="panel" style="left:455.5px;top:18px;width:760px;height:221.5px;border-bottom-left-radius:7px"></div>
<div class="" style="left:456px;top:36px;width:1px;height:197px;background:#dae5ec"></div>
<span class="x tb" style="left:473px;top:6px;letter-spacing:.4px">IT12</span>
<div class="" style="left:593.5px;top:5px;width:79px;height:13px;background:linear-gradient(180deg,#eaf7fc 0%,#d3e9f4 100%);border-radius:4px 4px 0 0"></div>
<span class="x tab" style="left:483.0px;width:300px;text-align:center;top:6px;">IT12</span>
<div class="" style="left:673.5px;top:5px;width:79px;height:13px;background:linear-gradient(180deg,#c4e0ef 0%,#a9cfe4 60%,#b9d9ea 100%);border-radius:4px 4px 0 0"></div>
<span class="x tab" style="left:563.0px;width:300px;text-align:center;top:6px;">Stm Of Acc</span>
<svg style="left:455px;top:18px" width="20" height="20" viewBox="0 0 20 20"><defs><linearGradient id="g20" x1="0" y1="0" x2="0" y2="1"><stop offset="0" stop-color="#ffb000"/><stop offset="1" stop-color="#ff6400"/></linearGradient></defs><path d="M-1 -1 L17.6 -1 L17.6 0 L0 17.6 L-1 17.6 Z" fill="#0b4672"/><path d="M1.2 18.2 L15 18.2 Q18.2 18.2 18.2 15 L18.2 2 Z" fill="#7d8a94" opacity=".25"/><path d="M17 .3 L17 12.5 Q17 17 12.5 17 L.3 17 Z" fill="url(#g20)"/></svg>
<svg style="left:481px;top:22px" width="15" height="16" viewBox="0 0 15 16"><path d="M0.5 1.5 L8 1.5 L11.0 4.5 L11 15 L0.5 15 Z" fill="#fdfdff" stroke="#9aa2c4" stroke-width=".8"/><path d="M8 1.5 L8 4.5 L11 4.5" fill="#e6ecfb" stroke="#9aa2c4" stroke-width=".6"/><rect x="1.5" y="6.5" width="8.4" height="2.2" fill="#b8c4ea"/><rect x="1.5" y="9.2" width="8.4" height="4.800000000000001" fill="#d4dcf4"/><path d="M10.8 9.8 V14.8 M8.3 12.3 H13.3" stroke="#23a82a" stroke-width="2.9" stroke-linecap="round" fill="none"/><path d="M10.8 10 V14.6 M8.5 12.3 H13.1" stroke="#48cc48" stroke-width="1.7" stroke-linecap="round" fill="none"/></svg>
<svg style="left:499px;top:22px" width="15" height="16" viewBox="0 0 15 16"><path d="M0.5 1.5 L8 1.5 L11.0 4.5 L11 15 L0.5 15 Z" fill="#fdfdff" stroke="#9aa2c4" stroke-width=".8"/><path d="M8 1.5 L8 4.5 L11 4.5" fill="#e6ecfb" stroke="#9aa2c4" stroke-width=".6"/><rect x="1.5" y="6.5" width="8.4" height="2.2" fill="#b8c4ea"/><rect x="1.5" y="9.2" width="8.4" height="4.800000000000001" fill="#d4dcf4"/><path d="M4.2 12.6 L5 9.8 L10.6 2.6 L12.8 4.4 L7.2 11.6 Z" fill="#4cc43c" stroke="#2c9a22" stroke-width=".5"/><path d="M10.6 2.6 L11.6 1.3 Q12.4 .5 13.3 1.2 Q14.2 2 13.6 3 L12.8 4.4 Z" fill="#f04a3a"/><path d="M4.2 12.6 L5 9.8 L7.2 11.6 Z" fill="#f0e0b0"/><path d="M4.2 12.6 L4.6 11.4 L5.3 12 Z" fill="#333"/></svg>
<svg style="left:515.5px;top:22px" width="15" height="16" viewBox="0 0 15 16"><defs><linearGradient id="g21" x1="0" y1="0" x2="0" y2="1"><stop offset="0" stop-color="#ff5a2a"/><stop offset="1" stop-color="#e8381a"/></linearGradient></defs><path d="M2.6 2.6 L12.4 13.4 M12.6 2.4 L2.4 13.6" fill="none" stroke="url(#g21)" stroke-width="4.1" stroke-linecap="round"/></svg>
<svg style="left:533px;top:22px" width="17" height="16" viewBox="0 0 17 16"><path d="M6.0 1.0 L12.5 1.0 L15.5 4.0 L15.5 13.0 L6.0 13.0 Z" fill="#c9b8e8" stroke="#9aa2c4" stroke-width=".8"/><path d="M12.5 1.0 L12.5 4.0 L15.5 4.0" fill="#e6ecfb" stroke="#9aa2c4" stroke-width=".6"/><rect x="7.0" y="6.0" width="7.4" height="2.2" fill="#a890d8"/><rect x="7.0" y="8.7" width="7.4" height="3.3000000000000007" fill="#d4dcf4"/><path d="M0.5 3.0 L7.5 3.0 L10.5 6.0 L10.5 15.0 L0.5 15.0 Z" fill="#fdfdff" stroke="#9aa2c4" stroke-width=".8"/><path d="M7.5 3.0 L7.5 6.0 L10.5 6.0" fill="#e6ecfb" stroke="#9aa2c4" stroke-width=".6"/><rect x="1.5" y="8.0" width="7.9" height="2.2" fill="#b8c4ea"/><rect x="1.5" y="10.7" width="7.9" height="3.3000000000000007" fill="#d4dcf4"/></svg>
<div class="sep" style="left:551px;top:19px;width:1px;height:20px;"></div>
<svg style="left:554.5px;top:22.5px" width="15" height="15" viewBox="0 0 15 15"><defs><radialGradient id="g22" cx=".45" cy=".35" r=".7"><stop offset="0" stop-color="#8fd08f"/><stop offset="1" stop-color="#5aa85c"/></radialGradient></defs><circle cx="7.5" cy="7.5" r="7.3" fill="url(#g22)"/><path d="M3.4 7.8 L6.3 10.6 L11.8 4.8" fill="none" stroke="#fff" stroke-width="2" stroke-linecap="round" stroke-linejoin="round"/></svg>
<svg style="left:572.5px;top:22.5px" width="15" height="15" viewBox="0 0 15 15"><defs><radialGradient id="g23" cx=".45" cy=".35" r=".7"><stop offset="0" stop-color="#f4a898"/><stop offset="1" stop-color="#de7566"/></radialGradient></defs><circle cx="7.5" cy="7.5" r="7.3" fill="url(#g23)"/><path d="M4.6 4.6 L10.4 10.4 M10.4 4.6 L4.6 10.4" fill="none" stroke="#fff" stroke-width="2.1" stroke-linecap="round"/></svg>
<div class="sep" style="left:590px;top:19px;width:1px;height:20px;"></div>
<svg style="left:593px;top:22px" width="16" height="16" viewBox="0 0 16 16"><defs><linearGradient id="g24" x1="0" y1="0" x2="0" y2="1"><stop offset="0" stop-color="#ececee"/><stop offset="1" stop-color="#c2c2c5"/></linearGradient><linearGradient id="g26" x1="0" y1="0" x2="1" y2="1"><stop offset="0" stop-color="#b4b4b7"/><stop offset="1" stop-color="#6c6c6f"/></linearGradient><linearGradient id="g25" x1="0" y1="0" x2="0" y2="1"><stop offset="0" stop-color="#eaf2ff"/><stop offset="1" stop-color="#b9d3f7"/></linearGradient></defs><path d="M2.6 1 L8.8 .5 L11.3 6.2 L5 7.2 Z" fill="url(#g25)" stroke="#cfdff2" stroke-width=".5"/><path d="M.6 8.2 L4.6 6.6 L6 7.4 L11 6.4 L12.4 6.2 L15 8.4 L7.6 11 Z" fill="#f6f6f7"/><path d="M.6 8.2 L7.6 11 L7.4 15.2 L.6 12.2 Z" fill="url(#g24)"/><path d="M7.6 11 L15 8.4 L15 11.6 L7.4 15.2 Z" fill="url(#g26)"/><path d="M1.2 10.6 L6.8 13 L6.8 14.3 L1.2 11.9 Z" fill="#fdfdfd"/><ellipse cx="13" cy="8.7" rx="1" ry=".6" fill="#3ec62a"/></svg>
<svg style="left:611px;top:21px" width="17" height="17" viewBox="0 0 17 17"><defs><linearGradient id="g27" x1="0" y1="0" x2="1" y2="1"><stop offset="0" stop-color="#fdfdfd"/><stop offset="1" stop-color="#d5d7da"/></linearGradient><linearGradient id="g28" x1="0" y1="0" x2="0" y2="1"><stop offset="0" stop-color="#58e048"/><stop offset="1" stop-color="#14a010"/></linearGradient></defs><rect x=".8" y="1.7" width="14.4" height="9.6" rx=".8" fill="url(#g27)" stroke="#7d838b" stroke-width="1.1"/><path d="M1.2 2.2 L8 7.6 L14.8 2.2 M1.2 11 L5.8 6 M14.8 11 L10.2 6" fill="none" stroke="#b9bcc2" stroke-width=".8"/><path d="M5 9.7 L8 7.2 L8 8.6 L11.2 8.6 L11.2 10.8 L8 10.8 L8 12.2 Z" fill="url(#g28)" stroke="#1a7a14" stroke-width=".45"/><path d="M15.2 13.6 L12.2 11.1 L12.2 12.5 L8.8 12.5 L8.8 14.7 L12.2 14.7 L12.2 16.1 Z" fill="url(#g28)" stroke="#1a7a14" stroke-width=".45"/></svg>
<svg style="left:628.5px;top:21px" width="16" height="17" viewBox="0 0 16 17"><defs><linearGradient id="g29" x1="0" y1="0" x2="0" y2="1"><stop offset="0" stop-color="#7a7a7c"/><stop offset=".45" stop-color="#c6c6c8"/><stop offset="1" stop-color="#9a9a9c"/></linearGradient></defs><rect x=".8" y="1.8" width="8" height="6" fill="#f6f6f7" stroke="#8c9098" stroke-width=".8"/><path d="M1 2 L4.8 5.2 L8.6 2 M1 7.6 L3.6 4.4" fill="none" stroke="#a9adb3" stroke-width=".7"/><rect x="8.9" y="3.9" width="6" height="12.6" rx="1.4" fill="url(#g29)" stroke="#463f3a" stroke-width="1.1"/><rect x="10" y="7" width="3.8" height="2.6" fill="#5fd0e0"/><path d="M5.6 4.8 L9.6 .8 L9.6 2.9 Q13.8 3.2 13.6 8.4 Q12.4 5.6 9.6 5.9 L9.6 8 Z" fill="#4cc860" stroke="#23903a" stroke-width=".45"/></svg>
<div class="sep" style="left:647px;top:19px;width:1px;height:20px;"></div>
<svg style="left:650.5px;top:22px" width="16" height="16" viewBox="0 0 16 16"><defs><linearGradient id="g30" x1="0" y1="0" x2="1" y2="0"><stop offset="0" stop-color="#0a55c8"/><stop offset=".5" stop-color="#3f9bff"/><stop offset="1" stop-color="#1a6fe0"/></linearGradient></defs><path d="M3 1 L7.6 1 L7.6 9 L10.2 9 L5.3 14.6 L.4 9 L3 9 Z" fill="url(#g30)"/><rect x="9" y="1.2" width="6.5" height="2.4" fill="#3fc01f"/><rect x="10.5" y="4.6" width="5" height="2.4" fill="#3fc01f"/><rect x="12" y="8" width="3.5" height="2.4" fill="#3fc01f"/><rect x="13" y="11.4" width="2.5" height="2.4" fill="#3fc01f"/></svg>
<div class="" style="left:472px;top:40px;width:707.5px;height:62px;border:1px solid #9a9c9f;border-right-color:#55585c;border-bottom-color:#3f4144"></div>
<div class="" style="left:482px;top:42px;width:571px;height:16.5px;background:#007aff"></div>
<span class="x ttl" style="left:483px;top:43px;">Particulars of Taxpayer</span>
<span class="x t" style="right:622px;top:66px;">Client Code</span>
<div class="in" style="left:592px;top:61px;width:458.5px;height:17px;"></div>
<span class="x t g" style="left:593.3px;top:66px;">BR001|BRUYN JOHN HENDRINNA</span>
<span class="x t" style="right:622px;top:87px;">Id/Reg No</span>
<div class="in" style="left:592px;top:82px;width:124.5px;height:17px;"></div>
<span class="x t g" style="left:593.3px;top:87px;">8708195231895</span>
<span class="x t" style="left:742.5px;top:87px;">DOB</span>
<div class="in" style="left:769px;top:82px;width:74.5px;height:17px;"></div>
<span class="x t g" style="left:771px;top:87px;">19-06-1940</span>
<span class="x t" style="left:892.4px;top:87px;">Tax Number</span>
<div class="in" style="left:954px;top:82px;width:96.5px;height:17px;"></div>
<span class="x t g" style="left:955.5px;top:87px;">0322210642</span>
<span class="x big" style="left:1060.5px;top:48px;">2021</span>
<span class="x t g2" style="left:1058.5px;top:67px;">MARK SILBERMAN</span>
<span class="x t g2" style="left:1058.5px;top:87px;">SILBERMAN MARK</span>
<div class="" style="left:457px;top:104px;width:752px;height:17px;background:linear-gradient(180deg,#fbfcfd 0%,#f4f7fa 46%,#dde5ec 52%,#c4cfd9 100%)"></div>
<div class="" style="left:474.0px;top:104px;width:1px;height:17px;background:#555a60"></div>
<div class="" style="left:513.0px;top:104px;width:1px;height:17px;background:#555a60"></div>
<div class="" style="left:601.0px;top:104px;width:1px;height:17px;background:#555a60"></div>
<div class="" style="left:689.0px;top:104px;width:1px;height:17px;background:#555a60"></div>
<div class="" style="left:777.0px;top:104px;width:1px;height:17px;background:#555a60"></div>
<div class="" style="left:855.0px;top:104px;width:1px;height:17px;background:#555a60"></div>
<div class="" style="left:927.0px;top:104px;width:1px;height:17px;background:#555a60"></div>
<div class="" style="left:1010.0px;top:104px;width:1px;height:17px;background:#555a60"></div>
<div class="" style="left:1172.0px;top:104px;width:1px;height:17px;background:#555a60"></div>
<span class="x t k" style="left:480px;top:107px;">Year</span>
<span class="x t k" style="left:523.5px;top:107px;">Total Income</span>
<div style="left:602px;top:104px;width:78px;height:17px;overflow:hidden"><span class="x t k" style="left:2.5px;top:3px;letter-spacing:-.15px">Total Deductions</span></div>
<span class="x t k" style="left:692.5px;top:107px;">Taxable Income</span>
<span class="x t k" style="left:791.6px;top:107px;">Total Tax</span>
<span class="x t k" style="left:860.5px;top:107px;">Tax Credits</span>
<span class="x t k" style="left:931.5px;top:107px;">Due by/to You</span>
<span class="x t k" style="left:1072.5px;top:107px;">Status</span>
<span class="x t k" style="left:1176px;top:107px;">Submitted</span>
<svg style="left:505px;top:111px" width="9" height="6" viewBox="0 0 9 6"><path d="M0.8 0.8 L7.6 0.8 L4.2 5 Z" fill="#5a5a4c"/></svg>
<div class="" style="left:457px;top:121px;width:752px;height:19px;background:#b5f9b4"></div>
<div class="c" style="left:457.5px;top:121px;width:15.5px;height:16px;background:#b5f9b4"></div>
<div class="c" style="left:475.0px;top:121px;width:37.0px;height:16px;background:#b5f9b4"></div>
<div class="c" style="left:514.0px;top:121px;width:86.0px;height:16px;background:#b5f9b4"></div>
<div class="c" style="left:602.0px;top:121px;width:86.0px;height:16px;background:#b5f9b4"></div>
<div class="c" style="left:690.0px;top:121px;width:86.0px;height:16px;background:#b5f9b4"></div>
<div class="c" style="left:778.0px;top:121px;width:76.0px;height:16px;background:#b5f9b4"></div>
<div class="c" style="left:856.0px;top:121px;width:70.0px;height:16px;background:#b5f9b4"></div>
<div class="c" style="left:928.0px;top:121px;width:81.0px;height:16px;background:#b5f9b4"></div>
<div class="c" style="left:1173.0px;top:121px;width:85.5px;height:16px;background:#b5f9b4"></div>
<svg style="left:459px;top:123px" width="14" height="15" viewBox="0 0 14 15"><path d="M6.7 1.2 L12.6 12.8 L.8 12.8 Z" fill="#fff" stroke="#f8c60a" stroke-width="1.8" stroke-linejoin="round"/><rect x="6" y="5.2" width="1.5" height="3.8" rx=".4" fill="#e32222"/><rect x="6" y="9.8" width="1.5" height="1.5" rx=".4" fill="#e32222"/></svg>
<span class="x t g" style="left:477px;top:125px;">2021</span>
<span class="x t g" style="right:608.5px;top:125px;">52,406,400.00</span>
<span class="x t g" style="right:520.5px;top:125px;">50,000,000.00</span>
<span class="x t g" style="right:432.5px;top:125px;">1,156,400.00</span>
<span class="x t g" style="right:354.5px;top:125px;">286,073.17</span>
<span class="x t g" style="right:282.5px;top:125px;">50,000.00</span>
<span class="x t g" style="right:199.5px;top:125px;">236,073.17</span>
<div class="sl" style="left:1011px;top:121px;width:159.5px;height:16px;background:#b5f9b4;border-color:#4a5058"></div>
<span class="x sel g" style="left:1017.6px;top:124.80000000000001px;">CREATED</span>
<svg style="left:1158.5px;top:128px" width="9" height="6.48" viewBox="0 0 9 6.48"><path d="M0.6 0.8 L4.0 4.48 L7.4 0.8" fill="none" stroke="#74747a" stroke-width="1.5" stroke-linecap="round" stroke-linejoin="round"/></svg>
<div class="" style="left:457px;top:140px;width:752px;height:19px;background:#c8d6df"></div>
<div class="c" style="left:457.5px;top:140px;width:15.5px;height:16px;background:#c8d6df"></div>
<div class="c" style="left:475.0px;top:140px;width:37.0px;height:16px;background:#c8d6df"></div>
<div class="c" style="left:514.0px;top:140px;width:86.0px;height:16px;background:#c8d6df"></div>
<div class="c" style="left:602.0px;top:140px;width:86.0px;height:16px;background:#c8d6df"></div>
<div class="c" style="left:690.0px;top:140px;width:86.0px;height:16px;background:#c8d6df"></div>
<div class="c" style="left:778.0px;top:140px;width:76.0px;height:16px;background:#c8d6df"></div>
<div class="c" style="left:856.0px;top:140px;width:70.0px;height:16px;background:#c8d6df"></div>
<div class="c" style="left:928.0px;top:140px;width:81.0px;height:16px;background:#c8d6df"></div>
<div class="c" style="left:1173.0px;top:140px;width:85.5px;height:16px;background:#c8d6df"></div>
<svg style="left:459px;top:141.5px" width="15" height="16" viewBox="0 0 15 16"><defs><linearGradient id="g31" x1="0" y1="0" x2="1" y2="1"><stop offset="0" stop-color="#fff8a8"/><stop offset="1" stop-color="#fbe05c"/></linearGradient></defs><path d="M2.2 2.4 L12.2 2.4 L12.2 12 Q12.2 13.3 11 13.3 L1.4 13.3 Q2.2 12.5 2.2 11.2 Z" fill="url(#g31)" stroke="#e9b822" stroke-width="1.1"/><path d="M1.6 13.6 L11.4 13.6" stroke="#d9a514" stroke-width=".8"/><path d="M3.4 2.8 L7.4 7" stroke="#a2a2ac" stroke-width=".9"/><path d="M1 1 L4.2 .6 L5.2 3.4 L3 5.2 L.8 3.6 Z" fill="#1d4ec4"/><circle cx="2.6" cy="2.2" r=".8" fill="#6a96f4"/></svg>
<span class="x t g" style="left:477px;top:144px;">2020</span>
<span class="x t g" style="right:608.5px;top:144px;">.00</span>
<span class="x t g" style="right:520.5px;top:144px;">.00</span>
<span class="x t g" style="right:432.5px;top:144px;">.00</span>
<span class="x t g" style="right:354.5px;top:144px;">.00</span>
<div style="left:857.0px;top:141px;width:68.5px;height:16px;overflow:hidden"><span class="x t g" style="left:1px;top:3px">73,141,364.85</span></div>
<span class="x t g" style="right:199.5px;top:144px;">-73,141,364.85</span>
<div class="sl" style="left:1011px;top:140px;width:159.5px;height:16px;background:#c8d6df;border-color:#4a5058"></div>
<span class="x sel g" style="left:1017.6px;top:143.8px;">CREATED</span>
<svg style="left:1158.5px;top:147px" width="9" height="6.48" viewBox="0 0 9 6.48"><path d="M0.6 0.8 L4.0 4.48 L7.4 0.8" fill="none" stroke="#74747a" stroke-width="1.5" stroke-linecap="round" stroke-linejoin="round"/></svg>
<div class="" style="left:457px;top:159px;width:752px;height:19px;background:#d5e3ed"></div>
<div class="c" style="left:457.5px;top:159px;width:15.5px;height:16px;background:#d5e3ed"></div>
<div class="c" style="left:475.0px;top:159px;width:37.0px;height:16px;background:#d5e3ed"></div>
<div class="c" style="left:514.0px;top:159px;width:86.0px;height:16px;background:#d5e3ed"></div>
<div class="c" style="left:602.0px;top:159px;width:86.0px;height:16px;background:#d5e3ed"></div>
<div class="c" style="left:690.0px;top:159px;width:86.0px;height:16px;background:#d5e3ed"></div>
<div class="c" style="left:778.0px;top:159px;width:76.0px;height:16px;background:#d5e3ed"></div>
<div class="c" style="left:856.0px;top:159px;width:70.0px;height:16px;background:#d5e3ed"></div>
<div class="c" style="left:928.0px;top:159px;width:81.0px;height:16px;background:#d5e3ed"></div>
<div class="c" style="left:1173.0px;top:159px;width:85.5px;height:16px;background:#d5e3ed"></div>
<svg style="left:459px;top:160.5px" width="15" height="16" viewBox="0 0 15 16"><defs><linearGradient id="g32" x1="0" y1="0" x2="1" y2="1"><stop offset="0" stop-color="#fff8a8"/><stop offset="1" stop-color="#fbe05c"/></linearGradient></defs><path d="M2.2 2.4 L12.2 2.4 L12.2 12 Q12.2 13.3 11 13.3 L1.4 13.3 Q2.2 12.5 2.2 11.2 Z" fill="url(#g32)" stroke="#e9b822" stroke-width="1.1"/><path d="M1.6 13.6 L11.4 13.6" stroke="#d9a514" stroke-width=".8"/><path d="M3.4 2.8 L7.4 7" stroke="#a2a2ac" stroke-width=".9"/><path d="M1 1 L4.2 .6 L5.2 3.4 L3 5.2 L.8 3.6 Z" fill="#1d4ec4"/><circle cx="2.6" cy="2.2" r=".8" fill="#6a96f4"/></svg>
<span class="x t g" style="left:477px;top:163px;">2019</span>
<span class="x t g" style="right:608.5px;top:163px;">1,000,000.00</span>
<span class="x t g" style="right:520.5px;top:163px;">275,000.00</span>
<span class="x t g" style="right:432.5px;top:163px;">725,000.00</span>
<span class="x t g" style="right:354.5px;top:163px;">173,286.90</span>
<span class="x t g" style="right:282.5px;top:163px;">.00</span>
<span class="x t g" style="right:199.5px;top:163px;">173,286.90</span>
<div class="sl" style="left:1011px;top:159px;width:159.5px;height:16px;background:#d5e3ed;border-color:#4a5058"></div>
<span class="x sel g" style="left:1017.6px;top:162.8px;">CREATED</span>
<svg style="left:1158.5px;top:166px" width="9" height="6.48" viewBox="0 0 9 6.48"><path d="M0.6 0.8 L4.0 4.48 L7.4 0.8" fill="none" stroke="#74747a" stroke-width="1.5" stroke-linecap="round" stroke-linejoin="round"/></svg>
<span class="x t g" style="left:1176px;top:163px;">09/08/2019</span>
<div class="" style="left:457px;top:178px;width:752px;height:19px;background:#c8d6df"></div>
<div class="c" style="left:457.5px;top:178px;width:15.5px;height:16px;background:#c8d6df"></div>
<div class="c" style="left:475.0px;top:178px;width:37.0px;height:16px;background:#c8d6df"></div>
<div class="c" style="left:514.0px;top:178px;width:86.0px;height:16px;background:#c8d6df"></div>
<div class="c" style="left:602.0px;top:178px;width:86.0px;height:16px;background:#c8d6df"></div>
<div class="c" style="left:690.0px;top:178px;width:86.0px;height:16px;background:#c8d6df"></div>
<div class="c" style="left:778.0px;top:178px;width:76.0px;height:16px;background:#c8d6df"></div>
<div class="c" style="left:856.0px;top:178px;width:70.0px;height:16px;background:#c8d6df"></div>
<div class="c" style="left:928.0px;top:178px;width:81.0px;height:16px;background:#c8d6df"></div>
<div class="c" style="left:1173.0px;top:178px;width:85.5px;height:16px;background:#c8d6df"></div>
<svg style="left:459px;top:179.5px" width="15" height="16" viewBox="0 0 15 16"><defs><linearGradient id="g33" x1="0" y1="0" x2="1" y2="1"><stop offset="0" stop-color="#fff8a8"/><stop offset="1" stop-color="#fbe05c"/></linearGradient></defs><path d="M2.2 2.4 L12.2 2.4 L12.2 12 Q12.2 13.3 11 13.3 L1.4 13.3 Q2.2 12.5 2.2 11.2 Z" fill="url(#g33)" stroke="#e9b822" stroke-width="1.1"/><path d="M1.6 13.6 L11.4 13.6" stroke="#d9a514" stroke-width=".8"/><path d="M3.4 2.8 L7.4 7" stroke="#a2a2ac" stroke-width=".9"/><path d="M1 1 L4.2 .6 L5.2 3.4 L3 5.2 L.8 3.6 Z" fill="#1d4ec4"/><circle cx="2.6" cy="2.2" r=".8" fill="#6a96f4"/></svg>
<span class="x t g" style="left:477px;top:182px;">2018</span>
<span class="x t g" style="right:608.5px;top:182px;">1,000,000.00</span>
<span class="x t g" style="right:520.5px;top:182px;">275,000.00</span>
<span class="x t g" style="right:432.5px;top:182px;">725,000.00</span>
<span class="x t g" style="right:354.5px;top:182px;">192,267.90</span>
<span class="x t g" style="right:282.5px;top:182px;">305,017.90</span>
<span class="x t g" style="right:199.5px;top:182px;">-112,750.00</span>
<div class="sl" style="left:1011px;top:178px;width:159.5px;height:16px;background:#c8d6df;border-color:#4a5058"></div>
<span class="x sel g" style="left:1017.6px;top:181.8px;">AUTO ASSESSED</span>
<svg style="left:1158.5px;top:185px" width="9" height="6.48" viewBox="0 0 9 6.48"><path d="M0.6 0.8 L4.0 4.48 L7.4 0.8" fill="none" stroke="#74747a" stroke-width="1.5" stroke-linecap="round" stroke-linejoin="round"/></svg>
<span class="x t g" style="left:1176px;top:182px;">05/11/2018</span>
<div class="" style="left:457px;top:197px;width:752px;height:19px;background:#d5e3ed"></div>
<div class="c" style="left:457.5px;top:197px;width:15.5px;height:16px;background:#d5e3ed"></div>
<div class="c" style="left:475.0px;top:197px;width:37.0px;height:16px;background:#d5e3ed"></div>
<div class="c" style="left:514.0px;top:197px;width:86.0px;height:16px;background:#d5e3ed"></div>
<div class="c" style="left:602.0px;top:197px;width:86.0px;height:16px;background:#d5e3ed"></div>
<div class="c" style="left:690.0px;top:197px;width:86.0px;height:16px;background:#d5e3ed"></div>
<div class="c" style="left:778.0px;top:197px;width:76.0px;height:16px;background:#d5e3ed"></div>
<div class="c" style="left:856.0px;top:197px;width:70.0px;height:16px;background:#d5e3ed"></div>
<div class="c" style="left:928.0px;top:197px;width:81.0px;height:16px;background:#d5e3ed"></div>
<div class="c" style="left:1173.0px;top:197px;width:85.5px;height:16px;background:#d5e3ed"></div>
<span class="x t g" style="left:477px;top:201px;">2017</span>
<span class="x t g" style="right:608.5px;top:201px;">200,000.00</span>
<span class="x t g" style="right:520.5px;top:201px;">55,000.00</span>
<span class="x t g" style="right:432.5px;top:201px;">145,000.00</span>
<span class="x t g" style="right:354.5px;top:201px;">12,600.00</span>
<span class="x t g" style="right:282.5px;top:201px;">.00</span>
<span class="x t g" style="right:199.5px;top:201px;">12,600.00</span>
<div class="sl" style="left:1011px;top:197px;width:159.5px;height:16px;background:#d5e3ed;border-color:#4a5058"></div>
<span class="x sel g" style="left:1017.6px;top:200.8px;">QUEUED</span>
<svg style="left:1158.5px;top:204px" width="9" height="6.48" viewBox="0 0 9 6.48"><path d="M0.6 0.8 L4.0 4.48 L7.4 0.8" fill="none" stroke="#74747a" stroke-width="1.5" stroke-linecap="round" stroke-linejoin="round"/></svg>
<span class="x t g" style="left:1176px;top:201px;">16/08/2017</span>
<div class="panel" style="left:455.5px;top:270px;width:760px;height:450px;"></div>
<div class="" style="left:456px;top:288px;width:1px;height:426px;background:#dae5ec"></div>
<span class="x tb" style="left:473.5px;top:258px;letter-spacing:.15px">TAX CALCULATION</span>
<div class="" style="left:593.5px;top:257px;width:79px;height:13px;background:linear-gradient(180deg,#eaf7fc 0%,#d3e9f4 100%);border-radius:4px 4px 0 0"></div>
<span class="x tab" style="left:483.0px;width:300px;text-align:center;top:258px;">Tax Calculation</span>
<div class="" style="left:673.5px;top:257px;width:79px;height:13px;background:linear-gradient(180deg,#c4e0ef 0%,#a9cfe4 60%,#b9d9ea 100%);border-radius:4px 4px 0 0"></div>
<span class="x tab" style="left:563.0px;width:300px;text-align:center;top:258px;">Income</span>
<div class="" style="left:753.5px;top:257px;width:79px;height:13px;background:linear-gradient(180deg,#c4e0ef 0%,#a9cfe4 60%,#b9d9ea 100%);border-radius:4px 4px 0 0"></div>
<span class="x tab" style="left:643.0px;width:300px;text-align:center;top:258px;">Deductions</span>
<div class="" style="left:833.5px;top:257px;width:79px;height:13px;background:linear-gradient(180deg,#c4e0ef 0%,#a9cfe4 60%,#b9d9ea 100%);border-radius:4px 4px 0 0"></div>
<span class="x tab" style="left:723.0px;width:300px;text-align:center;top:258px;">Demographics</span>
<div class="" style="left:913.5px;top:257px;width:79px;height:13px;background:linear-gradient(180deg,#c4e0ef 0%,#a9cfe4 60%,#b9d9ea 100%);border-radius:4px 4px 0 0"></div>
<span class="x tab" style="left:803.0px;width:300px;text-align:center;top:258px;">Gen Info</span>
<div class="" style="left:993.5px;top:257px;width:79px;height:13px;background:linear-gradient(180deg,#c4e0ef 0%,#a9cfe4 60%,#b9d9ea 100%);border-radius:4px 4px 0 0"></div>
<span class="x tab" style="left:883.0px;width:300px;text-align:center;top:258px;">Capital Recon</span>
<div class="" style="left:1073.5px;top:257px;width:79px;height:13px;background:linear-gradient(180deg,#c4e0ef 0%,#a9cfe4 60%,#b9d9ea 100%);border-radius:4px 4px 0 0"></div>
<span class="x tab" style="left:963.0px;width:300px;text-align:center;top:258px;">e-filing</span>
<div class="" style="left:1153.5px;top:257px;width:79px;height:13px;background:linear-gradient(180deg,#c4e0ef 0%,#a9cfe4 60%,#b9d9ea 100%);border-radius:4px 4px 0 0"></div>
<span class="x tab" style="left:1043.0px;width:300px;text-align:center;top:258px;">Documents</span>
<svg style="left:455px;top:270px" width="20" height="20" viewBox="0 0 20 20"><defs><linearGradient id="g34" x1="0" y1="0" x2="0" y2="1"><stop offset="0" stop-color="#ffb000"/><stop offset="1" stop-color="#ff6400"/></linearGradient></defs><path d="M-1 -1 L17.6 -1 L17.6 0 L0 17.6 L-1 17.6 Z" fill="#125379"/><path d="M1.2 18.2 L15 18.2 Q18.2 18.2 18.2 15 L18.2 2 Z" fill="#7d8a94" opacity=".25"/><path d="M17 .3 L17 12.5 Q17 17 12.5 17 L.3 17 Z" fill="url(#g34)"/></svg>
<svg style="left:481px;top:274px" width="15" height="16" viewBox="0 0 15 16"><path d="M0.5 1.5 L8 1.5 L11.0 4.5 L11 15 L0.5 15 Z" fill="#fdfdff" stroke="#9aa2c4" stroke-width=".8"/><path d="M8 1.5 L8 4.5 L11 4.5" fill="#e6ecfb" stroke="#9aa2c4" stroke-width=".6"/><rect x="1.5" y="6.5" width="8.4" height="2.2" fill="#b8c4ea"/><rect x="1.5" y="9.2" width="8.4" height="4.800000000000001" fill="#d4dcf4"/><path d="M4.2 12.6 L5 9.8 L10.6 2.6 L12.8 4.4 L7.2 11.6 Z" fill="#4cc43c" stroke="#2c9a22" stroke-width=".5"/><path d="M10.6 2.6 L11.6 1.3 Q12.4 .5 13.3 1.2 Q14.2 2 13.6 3 L12.8 4.4 Z" fill="#f04a3a"/><path d="M4.2 12.6 L5 9.8 L7.2 11.6 Z" fill="#f0e0b0"/><path d="M4.2 12.6 L4.6 11.4 L5.3 12 Z" fill="#333"/></svg>
<svg style="left:497.5px;top:274.5px" width="15" height="15" viewBox="0 0 15 15"><defs><radialGradient id="g35" cx=".45" cy=".35" r=".7"><stop offset="0" stop-color="#8fd08f"/><stop offset="1" stop-color="#5aa85c"/></radialGradient></defs><circle cx="7.5" cy="7.5" r="7.3" fill="url(#g35)"/><path d="M3.4 7.8 L6.3 10.6 L11.8 4.8" fill="none" stroke="#fff" stroke-width="2" stroke-linecap="round" stroke-linejoin="round"/></svg>
<svg style="left:515.5px;top:274.5px" width="15" height="15" viewBox="0 0 15 15"><defs><radialGradient id="g36" cx=".45" cy=".35" r=".7"><stop offset="0" stop-color="#f4a898"/><stop offset="1" stop-color="#de7566"/></radialGradient></defs><circle cx="7.5" cy="7.5" r="7.3" fill="url(#g36)"/><path d="M4.6 4.6 L10.4 10.4 M10.4 4.6 L4.6 10.4" fill="none" stroke="#fff" stroke-width="2.1" stroke-linecap="round"/></svg>
<div class="sep" style="left:533px;top:271px;width:1px;height:20px;"></div>
<svg style="left:536px;top:274px" width="16" height="16" viewBox="0 0 16 16"><defs><linearGradient id="g37" x1="0" y1="0" x2="0" y2="1"><stop offset="0" stop-color="#ececee"/><stop offset="1" stop-color="#c2c2c5"/></linearGradient><linearGradient id="g39" x1="0" y1="0" x2="1" y2="1"><stop offset="0" stop-color="#b4b4b7"/><stop offset="1" stop-color="#6c6c6f"/></linearGradient><linearGradient id="g38" x1="0" y1="0" x2="0" y2="1"><stop offset="0" stop-color="#eaf2ff"/><stop offset="1" stop-color="#b9d3f7"/></linearGradient></defs><path d="M2.6 1 L8.8 .5 L11.3 6.2 L5 7.2 Z" fill="url(#g38)" stroke="#cfdff2" stroke-width=".5"/><path d="M.6 8.2 L4.6 6.6 L6 7.4 L11 6.4 L12.4 6.2 L15 8.4 L7.6 11 Z" fill="#f6f6f7"/><path d="M.6 8.2 L7.6 11 L7.4 15.2 L.6 12.2 Z" fill="url(#g37)"/><path d="M7.6 11 L15 8.4 L15 11.6 L7.4 15.2 Z" fill="url(#g39)"/><path d="M1.2 10.6 L6.8 13 L6.8 14.3 L1.2 11.9 Z" fill="#fdfdfd"/><ellipse cx="13" cy="8.7" rx="1" ry=".6" fill="#3ec62a"/></svg>
<svg style="left:554px;top:273px" width="17" height="17" viewBox="0 0 17 17"><defs><linearGradient id="g40" x1="0" y1="0" x2="1" y2="1"><stop offset="0" stop-color="#fdfdfd"/><stop offset="1" stop-color="#d5d7da"/></linearGradient><linearGradient id="g41" x1="0" y1="0" x2="0" y2="1"><stop offset="0" stop-color="#58e048"/><stop offset="1" stop-color="#14a010"/></linearGradient></defs><rect x=".8" y="1.7" width="14.4" height="9.6" rx=".8" fill="url(#g40)" stroke="#7d838b" stroke-width="1.1"/><path d="M1.2 2.2 L8 7.6 L14.8 2.2 M1.2 11 L5.8 6 M14.8 11 L10.2 6" fill="none" stroke="#b9bcc2" stroke-width=".8"/><path d="M5 9.7 L8 7.2 L8 8.6 L11.2 8.6 L11.2 10.8 L8 10.8 L8 12.2 Z" fill="url(#g41)" stroke="#1a7a14" stroke-width=".45"/><path d="M15.2 13.6 L12.2 11.1 L12.2 12.5 L8.8 12.5 L8.8 14.7 L12.2 14.7 L12.2 16.1 Z" fill="url(#g41)" stroke="#1a7a14" stroke-width=".45"/></svg>
<svg style="left:571.5px;top:273px" width="16" height="17" viewBox="0 0 16 17"><defs><linearGradient id="g42" x1="0" y1="0" x2="0" y2="1"><stop offset="0" stop-color="#7a7a7c"/><stop offset=".45" stop-color="#c6c6c8"/><stop offset="1" stop-color="#9a9a9c"/></linearGradient></defs><rect x=".8" y="1.8" width="8" height="6" fill="#f6f6f7" stroke="#8c9098" stroke-width=".8"/><path d="M1 2 L4.8 5.2 L8.6 2 M1 7.6 L3.6 4.4" fill="none" stroke="#a9adb3" stroke-width=".7"/><rect x="8.9" y="3.9" width="6" height="12.6" rx="1.4" fill="url(#g42)" stroke="#463f3a" stroke-width="1.1"/><rect x="10" y="7" width="3.8" height="2.6" fill="#5fd0e0"/><path d="M5.6 4.8 L9.6 .8 L9.6 2.9 Q13.8 3.2 13.6 8.4 Q12.4 5.6 9.6 5.9 L9.6 8 Z" fill="#4cc860" stroke="#23903a" stroke-width=".45"/></svg>
<div class="sep" style="left:590px;top:271px;width:1px;height:20px;"></div>
<svg style="left:593.5px;top:274px" width="16" height="16" viewBox="0 0 16 16"><defs><linearGradient id="g43" x1="0" y1="0" x2="1" y2="0"><stop offset="0" stop-color="#0a55c8"/><stop offset=".5" stop-color="#3f9bff"/><stop offset="1" stop-color="#1a6fe0"/></linearGradient></defs><path d="M3 1 L7.6 1 L7.6 9 L10.2 9 L5.3 14.6 L.4 9 L3 9 Z" fill="url(#g43)"/><rect x="9" y="1.2" width="6.5" height="2.4" fill="#3fc01f"/><rect x="10.5" y="4.6" width="5" height="2.4" fill="#3fc01f"/><rect x="12" y="8" width="3.5" height="2.4" fill="#3fc01f"/><rect x="13" y="11.4" width="2.5" height="2.4" fill="#3fc01f"/></svg>
<div class="" style="left:466px;top:300px;width:102.5px;height:15px;background:#e6e8f7;border:1px solid #93a3cf;border-bottom:0"></div>
<span class="x t bl" style="left:477.3px;top:303px;letter-spacing:-0.3px">Income Summary</span>
<div class="" style="left:573px;top:300px;width:120.5px;height:15px;background:#e6e8f7;border:1px solid #93a3cf;border-bottom:0"></div>
<span class="x t bl" style="left:584px;top:303px;letter-spacing:-0.3px">Deductions Summary</span>
<div class="" style="left:462px;top:316px;width:746px;height:1px;background:#8fa0cc"></div>
<div class="" style="left:699px;top:300px;width:93px;height:16px;background:#ffffff;border:1px solid #93a3cf;border-bottom:0"></div>
<span class="x t k" style="left:710.5px;top:303px;letter-spacing:-0.1px">Tax Calculation</span>
<span class="x t" style="left:475px;top:322px;">Tax Year</span>
<div class="in" style="left:530px;top:317px;width:38px;height:18px;"></div>
<span class="x t g" style="left:400.0px;width:300px;text-align:center;top:322px;">2021</span>
<span class="x t" style="left:576.5px;top:322px;">Days</span>
<div class="in" style="left:612px;top:317px;width:43px;height:18px;"></div>
<span class="x t g" style="left:484.5px;width:300px;text-align:center;top:322px;">365</span>
<div class="in" style="left:681px;top:317px;width:78px;height:18px;"></div>
<div class="" style="left:683.3px;top:320px;width:9.3px;height:9.3px;background:#fff;border:2px solid #c0c1cc;border-radius:3px"></div>
<span class="x t g" style="left:699.5px;top:322px;">Deceased</span>
<div class="bt" style="left:811px;top:317px;width:40.5px;height:21.5px;"></div>
<svg style="left:823px;top:319.5px" width="19" height="19" viewBox="0 0 19 19"><path d="M10 18.4 L15.6 14.2 L16.8 15.8 L11 18.6 Z" fill="#c4c4c9" opacity=".8"/><path d="M8.9 .5 L17.4 3 L9.8 18.2 L1.6 13.7 Z" fill="#5b82ab" stroke="#6a8cb2" stroke-width=".5"/><path d="M9.2 1.6 L16.2 3.7 L14.6 6.9 L7.6 4.7 Z" fill="#b3beb2"/><path d="M13.6 3.4 L16.2 4.2 L15.2 6.4 L12.6 5.6 Z" fill="#4a5868" opacity=".8"/><path d="M6.6 7.4 L12.6 9.6 L9.4 16.4 L3.2 13.2 Z" fill="#333c48"/><path d="M7.6 6.6 L13 8.4" stroke="#7f9cc0" stroke-width=".8"/><path d="M3.6 10.4 L5.8 11.3 L5 13.2 L2.8 12.1 Z" fill="#f0553a"/></svg>
<span class="x t" style="left:882.5px;top:319.5px;">Age</span>
<div class="in" style="left:915px;top:318px;width:25px;height:17px;"></div>
<span class="x t g" style="left:778.5px;width:300px;text-align:center;top:323px;">80</span>
<div class="bb" style="left:472px;top:344px;width:292px;height:64.5px;"></div>
<span class="x t d" style="right:603px;top:352.0px;">Total Income</span>
<div class="in" style="left:612px;top:347px;width:138px;height:17px;"></div>
<span class="x t g" style="right:458.5px;top:352.0px;">52,406,400.00</span>
<div style="left:517.5px;top:368px;width:88.5px;height:20px;overflow:hidden"><span class="x it d" style="right:0;top:3.5px">Exempt Income</span></div>
<div class="in" style="left:612px;top:368px;width:138px;height:17px;"></div>
<div style="left:613px;top:369px;width:138px;height:17px;overflow:hidden"><span class="x it g" style="right:-.5px;top:2.5px;font-size:12.6px">1,250,000.00</span></div>
<div style="left:517.5px;top:389px;width:88.5px;height:24px;overflow:hidden"><span class="x it d" style="left:0;top:6.5px;letter-spacing:.04px">Total deductions</span></div>
<div class="in" style="left:612px;top:389px;width:138px;height:17px;"></div>
<div style="left:613px;top:390px;width:138px;height:17px;overflow:hidden"><span class="x it g" style="right:-.5px;top:2.5px;font-size:12.6px">50,000,000.00</span></div>
<span class="x t r" style="right:603px;top:417.2px;">Taxable Income</span>
<div class="in" style="left:612px;top:413px;width:138px;height:17px;"></div>
<span class="x t g" style="right:458.5px;top:417.2px;">1,156,400.00</span>
<span class="x t d" style="right:603px;top:442.2px;">Normal Tax (A)</span>
<div class="in" style="left:612px;top:438px;width:138px;height:17px;"></div>
<span class="x t g" style="right:458.5px;top:442.2px;">386,895.00</span>
<span class="x t d" style="right:603px;top:464.2px;">Rebate (B)</span>
<div class="in" style="left:612px;top:460px;width:138px;height:17px;"></div>
<div style="left:613px;top:461px;width:138px;height:17px;overflow:hidden"><span class="x it g" style="right:-.5px;top:2.5px;font-size:12.6px">25,893.00</span></div>
<span class="x t d" style="right:603px;top:486.7px;">Medical Credit (C)</span>
<div class="in" style="left:612px;top:482.5px;width:138px;height:17px;"></div>
<div style="left:613px;top:483.5px;width:138px;height:17px;overflow:hidden"><span class="x it g" style="right:-.5px;top:2.5px;font-size:12.6px">74,928.83</span></div>
<span class="x t r" style="right:603px;top:509.20000000000005px;">Nett Normal (A-B-C+D)</span>
<div class="in" style="left:612px;top:505px;width:138px;height:17px;"></div>
<span class="x t g" style="right:458.5px;top:509.20000000000005px;">286,073.17</span>
<span class="x t d" style="right:603px;top:534.2px;">Additional Tax</span>
<div class="in" style="left:612px;top:530px;width:138px;height:17px;"></div>
<span class="x t g" style="right:458.5px;top:534.2px;">.00</span>
<span class="x t r" style="right:603px;top:555.2px;">Total Tax Payable</span>
<div class="in" style="left:612px;top:551px;width:138px;height:17px;"></div>
<span class="x t g" style="right:458.5px;top:555.2px;">286,073.17</span>
<div style="left:517.5px;top:572px;width:88.5px;height:20px;overflow:hidden"><span class="x it gr" style="right:-.5px;top:3.1999999999999993px;font-size:11.5px">Tax Credits</span></div>
<div class="in" style="left:612px;top:572px;width:138px;height:17px;"></div>
<span class="x t g" style="right:458.5px;top:576.2px;">50,000.00</span>
<div class="in" style="left:612px;top:595px;width:138px;height:17px;"></div>
<span class="x t g" style="right:458.5px;top:599.2px;">.00</span>
<span class="x t r" style="right:603px;top:619.7px;">Nett Dr/Cr</span>
<div class="in" style="left:612px;top:615.5px;width:138px;height:17px;"></div>
<span class="x t g" style="right:458.5px;top:619.7px;">236,073.17</span>
<span class="x t d" style="right:603px;top:645.2px;">Balance of Account</span>
<div class="in" style="left:612px;top:641px;width:138px;height:17px;"></div>
<span class="x t g" style="right:458.5px;top:645.2px;">.00</span>
<span class="x t r" style="right:603px;top:669.7px;">Tax Due</span>
<div class="in" style="left:612px;top:665.5px;width:138px;height:17px;"></div>
<span class="x t g" style="right:458.5px;top:669.7px;">236,073.17</span>
<span class="x t" style="left:505.5px;top:598.7px;">89 Quat</span>
<div class="bt" style="left:546px;top:594.3px;width:59.5px;height:17.5px;"></div>
<span class="x btn" style="left:559.5px;top:598px;">Interest</span>
<div class="bt" style="left:756.5px;top:571.5px;width:13px;height:17px;border-radius:3px"></div>
<span class="x t g" style="left:613.7px;width:300px;text-align:center;top:576px;">...</span>
<div class="bb" style="left:780px;top:344px;width:255px;height:103.5px;"></div>
<div class="bt" style="left:786px;top:346px;width:88.5px;height:17.5px;"></div>
<span class="x sbtn" style="left:793.5px;top:351px;">Lump Sums &gt;&gt;</span>
<span class="x t" style="right:332.5px;top:378.8px;">Prev Years</span>
<div class="in" style="left:881px;top:372px;width:138px;height:17px;"></div>
<span class="x t g" style="right:189.5px;top:376px;">0</span>
<span class="x t" style="right:332.5px;top:400.8px;">This year</span>
<div class="in" style="left:881px;top:394px;width:138px;height:17px;"></div>
<span class="x t g" style="right:189.5px;top:398px;">.00</span>
<span class="x t" style="right:332.5px;top:426.8px;">Tax (D)</span>
<div class="in" style="left:881px;top:420px;width:138px;height:17px;"></div>
<span class="x t g" style="right:189.5px;top:424px;">.00</span>
<div class="bb" style="left:781px;top:474px;width:255px;height:142px;"></div>
<div class="bt" style="left:786px;top:479.3px;width:88.5px;height:17.5px;"></div>
<span class="x sbtn" style="left:788.7px;top:484px;letter-spacing:.22px">Capital Gains &gt;&gt;</span>
<div class="" style="left:905px;top:482px;width:9.5px;height:9.5px;background:#e7edf1;border:2px solid #bbbcc8;border-radius:3px"></div>
<span class="x t g" style="left:921.5px;top:484px;letter-spacing:-.15px">Excl From Comm Estate</span>
<span class="x t" style="right:332.5px;top:508.79999999999995px;">Loss b/fwd</span>
<div class="in" style="left:881px;top:502px;width:138px;height:17px;"></div>
<span class="x t g" style="right:189.5px;top:506px;">.00</span>
<span class="x t" style="right:332.5px;top:529.8px;">Current Year</span>
<div class="in" style="left:881px;top:523px;width:138px;height:17px;"></div>
<span class="x t g" style="right:189.5px;top:527px;">.00</span>
<span class="x it d" style="right:331.5px;top:549.6px;font-size:11.6px">Exclusions</span>
<div class="in" style="left:881px;top:544px;width:138px;height:17px;"></div>
<span class="x t g" style="right:189.5px;top:548px;">40,000.00</span>
<span class="x t" style="right:332.5px;top:571.8px;">Nett</span>
<div class="in" style="left:881px;top:565px;width:138px;height:17px;"></div>
<span class="x t g" style="right:189.5px;top:569px;">.00</span>
<span class="x t" style="right:332.5px;top:592.8px;">Taxable</span>
<div class="in" style="left:881px;top:586px;width:138px;height:17px;"></div>
<span class="x t g" style="right:189.5px;top:590px;">.00</span>
<span class="x t" style="left:894.3px;top:629px;">This Year</span>
<span class="x t" style="left:971.4px;top:629px;">Last Year</span>
<span class="x t" style="right:333px;top:646.5px;">Average Rate</span>
<div class="in" style="left:881px;top:642px;width:59px;height:18px;"></div>
<span class="x t g" style="right:268.70000000000005px;top:646.5px;">24.738</span>
<div class="in" style="left:960px;top:642px;width:59px;height:18px;"></div>
<span class="x t g" style="right:189.70000000000005px;top:646.5px;">.000</span>
<span class="x t" style="right:333px;top:667.5px;">Marginal Rate</span>
<div class="in" style="left:881px;top:663px;width:59px;height:18px;"></div>
<span class="x t g" style="right:268.70000000000005px;top:667.5px;">41.000</span>
<div class="in" style="left:960px;top:663px;width:59px;height:18px;"></div>
<span class="x t g" style="right:189.70000000000005px;top:667.5px;">.000</span>
<div class="" style="left:1043px;top:630.5px;width:170px;height:55.5px;background:#fff;border:1px solid #595b5e;box-shadow:inset 0 0 0 1px #909396"></div>
<div class="bt" style="left:1045px;top:632px;width:80px;height:17.5px;"></div>
<span class="x btn" style="left:1064.5px;top:637px;">Invoice</span>
<div class="in" style="left:1046.5px;top:657px;width:82.5px;height:17.5px;"></div>
<div class="in" style="left:1133px;top:657px;width:70px;height:17.5px;"></div>
<div class="in" style="left:1207px;top:657px;width:18px;height:17.5px;"></div>
</body></html>
